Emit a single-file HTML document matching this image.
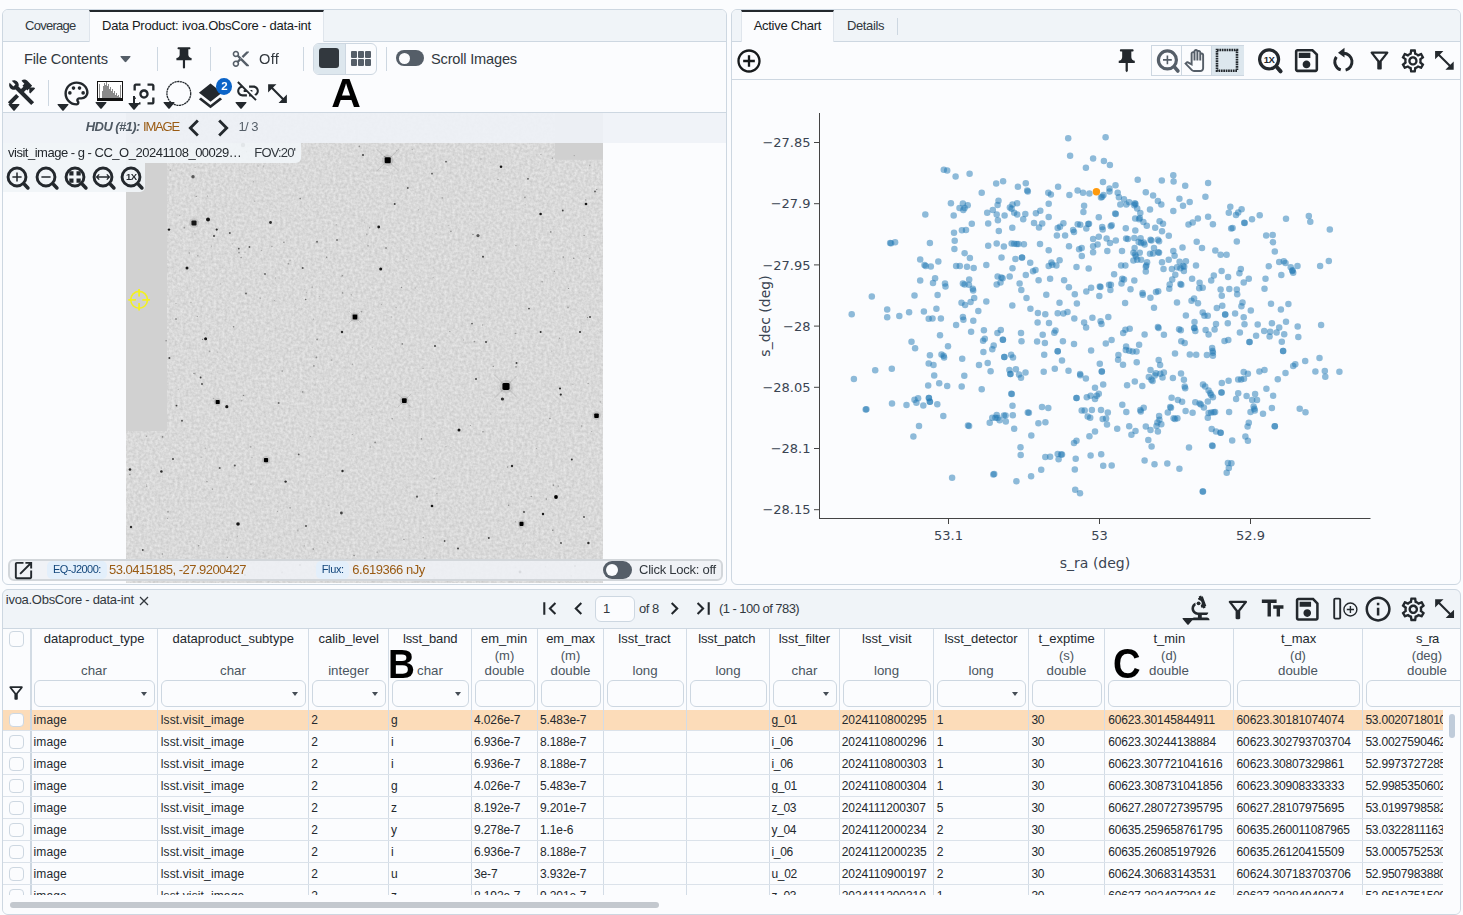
<!DOCTYPE html>
<html lang="en"><head><meta charset="utf-8"><title>Firefly - ivoa.ObsCore data-int</title>
<style>
html,body{margin:0;padding:0;}
body{width:1463px;height:915px;overflow:hidden;background:#fbfcfe;font-family:"Liberation Sans",sans-serif;color:#32383e;}
#root{position:relative;width:1463px;height:915px;overflow:hidden;}
.t{position:absolute;white-space:nowrap;line-height:1;font-family:"Liberation Sans",sans-serif;}
.dv{font-family:"DejaVu Sans","Liberation Sans",sans-serif;}
.i{position:absolute;display:block;overflow:visible;}
.b{position:absolute;box-sizing:border-box;}
.panel{position:absolute;box-sizing:border-box;border:1px solid #cdd7e1;border-radius:6px;background:#fbfcfe;overflow:hidden;}
.tabbar{position:absolute;left:0;top:0;right:0;height:31px;background:#f0f4f8;border-bottom:1px solid #cdd7e1;}
.tabsel{position:absolute;top:0;height:32px;background:#fbfcfe;border-top:2px solid #23282d;box-sizing:border-box;border-left:1px solid #dfe5ec;border-right:1px solid #dfe5ec;}
.vdiv{position:absolute;width:1px;background:#cdd7e1;}
.hline{position:absolute;height:1px;background:#cdd7e1;}
.toggle{position:absolute;width:28px;height:16px;border-radius:8px;background:#555e68;}
.toggle:after{content:"";position:absolute;left:3px;top:2.5px;width:11px;height:11px;border-radius:50%;background:#fbfcfe;}
.chip{position:absolute;background:#e3effb;border-radius:5px;}
.tg2{width:29px;height:17.600px;border-radius:9px;}
.tg2:after{left:3px;top:2.800px;width:12px;height:12px;}

</style></head>
<body>
<div id="root">
<div class="panel" id="lp" style="left:2px;top:9px;width:725px;height:576px"><div class="tabbar"></div>
<div style="position:absolute;left:-3px;top:-10px;width:1463px;height:915px">
<svg class="i" style="left:126px;top:112px" width="477" height="471" viewBox="126 112 477 471">
<defs><filter id="nz" x="0" y="0" width="100%" height="100%"><feTurbulence type="fractalNoise" baseFrequency="0.36" numOctaves="2" seed="3" result="n"/><feGaussianBlur in="n" stdDeviation="0.6" result="nb"/><feColorMatrix in="nb" type="matrix" values="0 0 0 0 0  0 0 0 0 0  0 0 0 0 0  1.2 0 0 0 -0.1"/></filter><filter id="bl"><feGaussianBlur stdDeviation="0.55"/></filter></defs>
<rect x="126" y="112" width="477" height="471" fill="#ebebeb"/>
<rect x="126" y="112" width="477" height="471" filter="url(#nz)" opacity="0.15"/>
<rect x="126" y="112" width="41" height="319" fill="#d1d1d1"/>
<rect x="555" y="112" width="48" height="47.800" fill="#d0d0d0"/>
<g filter="url(#bl)"><circle cx="281.2" cy="210.8" r="0.76" fill="#000" opacity="0.14"/><circle cx="381.5" cy="304.4" r="0.52" fill="#000" opacity="0.26"/><circle cx="328.8" cy="505.5" r="0.55" fill="#000" opacity="0.18"/><circle cx="424.8" cy="558.2" r="0.73" fill="#000" opacity="0.23"/><circle cx="589.8" cy="165.3" r="0.84" fill="#000" opacity="0.20"/><circle cx="196.2" cy="196.4" r="0.62" fill="#000" opacity="0.35"/><circle cx="213.5" cy="398.6" r="0.76" fill="#000" opacity="0.22"/><circle cx="387.1" cy="172.4" r="0.52" fill="#000" opacity="0.18"/><circle cx="449.8" cy="331.4" r="0.63" fill="#000" opacity="0.28"/><circle cx="342.4" cy="275.7" r="0.82" fill="#000" opacity="0.32"/><circle cx="243.5" cy="395.4" r="0.71" fill="#000" opacity="0.37"/><circle cx="473.0" cy="270.5" r="0.89" fill="#000" opacity="0.15"/><circle cx="325.8" cy="475.1" r="0.56" fill="#000" opacity="0.26"/><circle cx="146.5" cy="436.3" r="0.81" fill="#000" opacity="0.28"/><circle cx="542.1" cy="281.8" r="0.78" fill="#000" opacity="0.29"/><circle cx="402.3" cy="343.9" r="0.84" fill="#000" opacity="0.38"/><circle cx="352.2" cy="434.6" r="0.52" fill="#000" opacity="0.32"/><circle cx="434.1" cy="578.0" r="0.83" fill="#000" opacity="0.20"/><circle cx="310.5" cy="436.5" r="0.51" fill="#000" opacity="0.25"/><circle cx="207.5" cy="196.1" r="0.52" fill="#000" opacity="0.34"/><circle cx="189.2" cy="253.0" r="0.66" fill="#000" opacity="0.36"/><circle cx="166.1" cy="340.8" r="0.72" fill="#000" opacity="0.37"/><circle cx="515.5" cy="521.7" r="0.61" fill="#000" opacity="0.24"/><circle cx="297.7" cy="530.5" r="0.88" fill="#000" opacity="0.16"/><circle cx="211.4" cy="246.1" r="0.59" fill="#000" opacity="0.26"/><circle cx="406.7" cy="259.6" r="0.50" fill="#000" opacity="0.24"/><circle cx="302.7" cy="391.9" r="0.88" fill="#000" opacity="0.31"/><circle cx="371.8" cy="414.3" r="0.77" fill="#000" opacity="0.14"/><circle cx="553.5" cy="485.1" r="0.85" fill="#000" opacity="0.34"/><circle cx="313.6" cy="319.0" r="0.54" fill="#000" opacity="0.30"/><circle cx="226.7" cy="215.8" r="0.64" fill="#000" opacity="0.13"/><circle cx="176.0" cy="303.5" r="0.51" fill="#000" opacity="0.36"/><circle cx="418.5" cy="209.8" r="0.60" fill="#000" opacity="0.22"/><circle cx="300.2" cy="198.6" r="0.84" fill="#000" opacity="0.40"/><circle cx="348.4" cy="356.0" r="0.53" fill="#000" opacity="0.15"/><circle cx="290.1" cy="260.4" r="0.83" fill="#000" opacity="0.17"/><circle cx="138.9" cy="559.6" r="0.71" fill="#000" opacity="0.16"/><circle cx="384.9" cy="156.8" r="0.71" fill="#000" opacity="0.39"/><circle cx="536.4" cy="448.5" r="0.60" fill="#000" opacity="0.22"/><circle cx="207.0" cy="481.6" r="0.71" fill="#000" opacity="0.34"/><circle cx="283.9" cy="242.2" r="0.82" fill="#000" opacity="0.40"/><circle cx="531.3" cy="496.5" r="0.83" fill="#000" opacity="0.33"/><circle cx="235.2" cy="370.7" r="0.64" fill="#000" opacity="0.13"/><circle cx="250.6" cy="446.9" r="0.88" fill="#000" opacity="0.25"/><circle cx="571.2" cy="575.8" r="0.88" fill="#000" opacity="0.22"/><circle cx="232.3" cy="243.9" r="0.58" fill="#000" opacity="0.18"/><circle cx="423.2" cy="537.5" r="0.84" fill="#000" opacity="0.25"/><circle cx="436.9" cy="493.6" r="0.53" fill="#000" opacity="0.30"/><circle cx="558.3" cy="486.1" r="0.80" fill="#000" opacity="0.25"/><circle cx="212.4" cy="489.1" r="0.63" fill="#000" opacity="0.34"/><circle cx="587.6" cy="317.6" r="0.66" fill="#000" opacity="0.39"/><circle cx="470.8" cy="219.1" r="0.55" fill="#000" opacity="0.16"/><circle cx="556.0" cy="496.6" r="0.56" fill="#000" opacity="0.35"/><circle cx="591.7" cy="431.6" r="0.64" fill="#000" opacity="0.27"/><circle cx="190.0" cy="151.2" r="0.89" fill="#000" opacity="0.30"/><circle cx="377.1" cy="552.1" r="0.67" fill="#000" opacity="0.36"/><circle cx="518.8" cy="237.0" r="0.60" fill="#000" opacity="0.20"/><circle cx="241.8" cy="400.7" r="0.60" fill="#000" opacity="0.24"/><circle cx="190.0" cy="541.8" r="0.64" fill="#000" opacity="0.25"/><circle cx="403.9" cy="539.3" r="0.67" fill="#000" opacity="0.38"/><circle cx="365.3" cy="376.9" r="0.71" fill="#000" opacity="0.13"/><circle cx="336.2" cy="224.8" r="0.50" fill="#000" opacity="0.34"/><circle cx="209.5" cy="351.4" r="0.79" fill="#000" opacity="0.28"/><circle cx="282.2" cy="371.0" r="0.72" fill="#000" opacity="0.34"/><circle cx="178.2" cy="389.3" r="0.60" fill="#000" opacity="0.20"/><circle cx="493.3" cy="366.4" r="0.72" fill="#000" opacity="0.33"/><circle cx="559.6" cy="338.3" r="0.75" fill="#000" opacity="0.26"/><circle cx="370.3" cy="447.0" r="0.68" fill="#000" opacity="0.27"/><circle cx="354.1" cy="555.5" r="0.78" fill="#000" opacity="0.37"/><circle cx="573.7" cy="258.2" r="0.72" fill="#000" opacity="0.38"/><circle cx="525.3" cy="204.8" r="0.55" fill="#000" opacity="0.24"/><circle cx="162.6" cy="436.9" r="0.81" fill="#000" opacity="0.37"/><circle cx="201.1" cy="457.2" r="0.76" fill="#000" opacity="0.16"/><circle cx="545.6" cy="566.8" r="0.59" fill="#000" opacity="0.39"/><circle cx="316.4" cy="357.4" r="0.90" fill="#000" opacity="0.35"/><circle cx="204.4" cy="333.1" r="0.71" fill="#000" opacity="0.21"/><circle cx="220.6" cy="283.9" r="0.79" fill="#000" opacity="0.13"/><circle cx="390.1" cy="337.0" r="0.51" fill="#000" opacity="0.21"/><circle cx="423.1" cy="368.3" r="0.53" fill="#000" opacity="0.40"/><circle cx="500.9" cy="568.7" r="0.54" fill="#000" opacity="0.19"/><circle cx="146.7" cy="484.6" r="0.61" fill="#000" opacity="0.16"/><circle cx="327.7" cy="542.4" r="0.83" fill="#000" opacity="0.19"/><circle cx="198.7" cy="545.8" r="0.73" fill="#000" opacity="0.32"/><circle cx="170.3" cy="170.1" r="0.78" fill="#000" opacity="0.24"/><circle cx="162.3" cy="554.1" r="0.75" fill="#000" opacity="0.34"/><circle cx="167.6" cy="518.3" r="0.53" fill="#000" opacity="0.36"/><circle cx="342.6" cy="292.9" r="0.72" fill="#000" opacity="0.38"/><circle cx="254.7" cy="201.3" r="0.71" fill="#000" opacity="0.19"/><circle cx="179.8" cy="215.4" r="0.52" fill="#000" opacity="0.18"/><circle cx="275.6" cy="278.0" r="0.80" fill="#000" opacity="0.20"/><circle cx="364.5" cy="222.6" r="0.64" fill="#000" opacity="0.13"/><circle cx="246.5" cy="151.7" r="0.79" fill="#000" opacity="0.27"/><circle cx="217.6" cy="352.0" r="0.87" fill="#000" opacity="0.15"/><circle cx="515.3" cy="333.4" r="0.70" fill="#000" opacity="0.35"/><circle cx="313.9" cy="365.9" r="0.78" fill="#000" opacity="0.40"/><circle cx="290.1" cy="507.9" r="0.78" fill="#000" opacity="0.30"/><circle cx="319.4" cy="296.5" r="0.52" fill="#000" opacity="0.16"/><circle cx="161.5" cy="468.0" r="0.60" fill="#000" opacity="0.17"/><circle cx="168.0" cy="511.8" r="0.85" fill="#000" opacity="0.31"/><circle cx="261.4" cy="250.6" r="0.62" fill="#000" opacity="0.25"/><circle cx="202.5" cy="339.4" r="0.61" fill="#000" opacity="0.39"/><circle cx="588.1" cy="383.5" r="0.60" fill="#000" opacity="0.39"/><circle cx="274.4" cy="300.5" r="0.50" fill="#000" opacity="0.23"/><circle cx="352.5" cy="364.2" r="0.58" fill="#000" opacity="0.26"/><circle cx="170.5" cy="319.2" r="0.52" fill="#000" opacity="0.13"/><circle cx="271.9" cy="246.5" r="0.73" fill="#000" opacity="0.27"/><circle cx="483.0" cy="431.7" r="0.79" fill="#000" opacity="0.37"/><circle cx="312.2" cy="287.2" r="0.89" fill="#000" opacity="0.16"/><circle cx="470.5" cy="425.4" r="0.52" fill="#000" opacity="0.35"/><circle cx="549.9" cy="418.5" r="0.79" fill="#000" opacity="0.35"/><circle cx="193.9" cy="373.4" r="0.70" fill="#000" opacity="0.35"/><circle cx="508.6" cy="505.3" r="0.73" fill="#000" opacity="0.37"/><circle cx="451.0" cy="447.3" r="0.59" fill="#000" opacity="0.13"/><circle cx="191.0" cy="302.3" r="0.54" fill="#000" opacity="0.35"/><circle cx="392.2" cy="418.7" r="0.75" fill="#000" opacity="0.31"/><circle cx="359.4" cy="146.4" r="0.82" fill="#000" opacity="0.33"/><circle cx="365.9" cy="378.3" r="0.76" fill="#000" opacity="0.14"/><circle cx="476.5" cy="255.0" r="0.53" fill="#000" opacity="0.19"/><circle cx="473.0" cy="234.5" r="0.80" fill="#000" opacity="0.39"/><circle cx="361.6" cy="311.8" r="0.69" fill="#000" opacity="0.31"/><circle cx="490.8" cy="414.0" r="0.76" fill="#000" opacity="0.14"/><circle cx="197.7" cy="255.7" r="0.80" fill="#000" opacity="0.21"/><circle cx="396.6" cy="150.4" r="0.52" fill="#000" opacity="0.20"/><circle cx="445.9" cy="446.8" r="0.77" fill="#000" opacity="0.20"/><circle cx="372.3" cy="347.6" r="0.69" fill="#000" opacity="0.15"/><circle cx="550.7" cy="231.9" r="0.89" fill="#000" opacity="0.38"/><circle cx="515.8" cy="567.1" r="0.68" fill="#000" opacity="0.20"/><circle cx="227.3" cy="557.3" r="0.58" fill="#000" opacity="0.28"/><circle cx="195.0" cy="373.5" r="0.88" fill="#000" opacity="0.16"/><circle cx="516.0" cy="366.8" r="0.85" fill="#000" opacity="0.32"/><circle cx="237.4" cy="536.4" r="0.69" fill="#000" opacity="0.13"/><circle cx="341.2" cy="276.7" r="0.56" fill="#000" opacity="0.22"/><circle cx="277.5" cy="511.3" r="0.50" fill="#000" opacity="0.33"/><circle cx="524.9" cy="197.3" r="0.87" fill="#000" opacity="0.32"/><circle cx="554.4" cy="271.4" r="0.65" fill="#000" opacity="0.23"/><circle cx="600.4" cy="401.9" r="0.64" fill="#000" opacity="0.24"/><circle cx="258.1" cy="166.0" r="0.54" fill="#000" opacity="0.35"/><circle cx="263.1" cy="552.9" r="0.60" fill="#000" opacity="0.19"/><circle cx="369.7" cy="227.8" r="0.65" fill="#000" opacity="0.39"/><circle cx="546.3" cy="499.0" r="0.75" fill="#000" opacity="0.38"/><circle cx="573.0" cy="384.5" r="0.79" fill="#000" opacity="0.13"/><circle cx="474.4" cy="341.6" r="0.80" fill="#000" opacity="0.30"/><circle cx="263.4" cy="166.4" r="0.87" fill="#000" opacity="0.16"/><circle cx="351.3" cy="294.8" r="0.62" fill="#000" opacity="0.33"/><circle cx="589.8" cy="258.4" r="0.76" fill="#000" opacity="0.20"/><circle cx="391.6" cy="316.9" r="0.57" fill="#000" opacity="0.17"/><circle cx="226.3" cy="540.0" r="0.70" fill="#000" opacity="0.18"/><circle cx="556.7" cy="579.5" r="0.68" fill="#000" opacity="0.16"/><circle cx="219.0" cy="184.6" r="0.64" fill="#000" opacity="0.15"/><circle cx="241.1" cy="257.6" r="0.73" fill="#000" opacity="0.37"/><circle cx="482.6" cy="325.0" r="0.67" fill="#000" opacity="0.27"/><circle cx="306.3" cy="292.5" r="0.52" fill="#000" opacity="0.20"/><circle cx="585.7" cy="199.9" r="0.70" fill="#000" opacity="0.30"/><circle cx="536.1" cy="239.2" r="0.61" fill="#000" opacity="0.19"/><circle cx="317.1" cy="339.4" r="0.88" fill="#000" opacity="0.36"/><circle cx="540.9" cy="154.5" r="0.51" fill="#000" opacity="0.32"/><circle cx="551.7" cy="351.3" r="0.73" fill="#000" opacity="0.12"/><circle cx="313.2" cy="549.1" r="0.83" fill="#000" opacity="0.36"/><circle cx="587.9" cy="253.3" r="0.54" fill="#000" opacity="0.16"/><circle cx="375.1" cy="442.4" r="0.88" fill="#000" opacity="0.32"/><circle cx="434.2" cy="478.5" r="0.68" fill="#000" opacity="0.27"/><circle cx="146.7" cy="486.1" r="0.59" fill="#000" opacity="0.38"/><circle cx="433.3" cy="277.4" r="0.55" fill="#000" opacity="0.19"/><circle cx="429.0" cy="449.6" r="0.54" fill="#000" opacity="0.14"/><circle cx="376.1" cy="399.1" r="0.66" fill="#000" opacity="0.18"/><circle cx="412.3" cy="149.6" r="0.62" fill="#000" opacity="0.25"/><circle cx="581.6" cy="426.0" r="0.85" fill="#000" opacity="0.25"/><circle cx="239.0" cy="252.7" r="0.88" fill="#000" opacity="0.32"/><circle cx="273.4" cy="154.5" r="0.70" fill="#000" opacity="0.31"/><circle cx="326.7" cy="257.2" r="0.77" fill="#000" opacity="0.38"/><circle cx="235.3" cy="159.9" r="0.64" fill="#000" opacity="0.24"/><circle cx="450.9" cy="231.4" r="0.82" fill="#000" opacity="0.33"/><circle cx="366.8" cy="234.5" r="0.89" fill="#000" opacity="0.21"/><circle cx="515.9" cy="245.6" r="0.59" fill="#000" opacity="0.33"/><circle cx="267.5" cy="560.0" r="0.70" fill="#000" opacity="0.17"/><circle cx="233.6" cy="326.8" r="0.77" fill="#000" opacity="0.39"/><circle cx="197.2" cy="316.5" r="0.59" fill="#000" opacity="0.39"/><circle cx="195.1" cy="167.6" r="0.52" fill="#000" opacity="0.23"/><circle cx="552.8" cy="530.2" r="0.79" fill="#000" opacity="0.40"/><circle cx="568.6" cy="288.5" r="0.57" fill="#000" opacity="0.38"/><circle cx="481.0" cy="158.9" r="0.77" fill="#000" opacity="0.23"/><circle cx="304.8" cy="289.6" r="0.57" fill="#000" opacity="0.12"/><circle cx="260.3" cy="298.2" r="0.88" fill="#000" opacity="0.15"/><circle cx="584.1" cy="235.4" r="0.64" fill="#000" opacity="0.35"/><circle cx="516.8" cy="333.5" r="0.52" fill="#000" opacity="0.25"/><circle cx="304.3" cy="545.9" r="0.58" fill="#000" opacity="0.22"/><circle cx="552.3" cy="158.2" r="0.66" fill="#000" opacity="0.35"/><circle cx="490.6" cy="162.7" r="0.51" fill="#000" opacity="0.14"/><circle cx="563.2" cy="257.1" r="0.80" fill="#000" opacity="0.37"/><circle cx="288.4" cy="263.7" r="0.88" fill="#000" opacity="0.29"/><circle cx="252.0" cy="457.5" r="0.63" fill="#000" opacity="0.20"/><circle cx="129.8" cy="474.5" r="0.87" fill="#000" opacity="0.30"/><circle cx="574.2" cy="155.6" r="0.59" fill="#000" opacity="0.25"/><circle cx="580.6" cy="560.9" r="0.65" fill="#000" opacity="0.19"/><circle cx="331.4" cy="360.2" r="0.87" fill="#000" opacity="0.17"/><circle cx="507.6" cy="467.0" r="0.83" fill="#000" opacity="0.34"/><circle cx="415.2" cy="287.9" r="0.63" fill="#000" opacity="0.22"/><circle cx="498.0" cy="179.5" r="0.58" fill="#000" opacity="0.33"/><circle cx="245.0" cy="173.2" r="0.51" fill="#000" opacity="0.27"/><circle cx="282.1" cy="572.4" r="0.85" fill="#000" opacity="0.40"/><circle cx="253.3" cy="181.7" r="0.54" fill="#000" opacity="0.26"/><circle cx="463.7" cy="339.9" r="0.59" fill="#000" opacity="0.24"/><circle cx="421.4" cy="438.9" r="0.80" fill="#000" opacity="0.36"/><circle cx="442.3" cy="197.8" r="0.84" fill="#000" opacity="0.20"/><circle cx="396.1" cy="307.6" r="0.80" fill="#000" opacity="0.18"/><circle cx="245.0" cy="252.0" r="0.56" fill="#000" opacity="0.37"/><circle cx="401.5" cy="287.3" r="0.66" fill="#000" opacity="0.40"/><circle cx="368.0" cy="245.9" r="0.82" fill="#000" opacity="0.30"/><circle cx="596.7" cy="189.6" r="0.69" fill="#000" opacity="0.35"/><circle cx="525.6" cy="543.7" r="0.52" fill="#000" opacity="0.20"/><circle cx="184.4" cy="227.7" r="0.89" fill="#000" opacity="0.28"/><circle cx="568.0" cy="307.3" r="0.85" fill="#000" opacity="0.25"/><circle cx="251.0" cy="484.1" r="0.88" fill="#000" opacity="0.15"/><circle cx="410.0" cy="415.3" r="0.59" fill="#000" opacity="0.22"/><circle cx="194.9" cy="233.9" r="0.60" fill="#000" opacity="0.29"/><circle cx="436.2" cy="233.7" r="0.50" fill="#000" opacity="0.21"/><circle cx="448.8" cy="225.7" r="0.62" fill="#000" opacity="0.18"/><circle cx="504.2" cy="383.9" r="0.53" fill="#000" opacity="0.15"/><circle cx="315.0" cy="384.9" r="0.76" fill="#000" opacity="0.15"/><circle cx="205.4" cy="448.2" r="0.66" fill="#000" opacity="0.20"/><circle cx="273.5" cy="560.6" r="0.62" fill="#000" opacity="0.28"/><circle cx="387.7" cy="160.2" r="5.8" fill="#000" opacity="0.10"/><rect x="384.64" y="157.14" width="6.12" height="6.12" rx="1.26" fill="#000" opacity="1"/><circle cx="194" cy="223" r="4.8" fill="#000" opacity="0.10"/><rect x="191.45" y="220.45" width="5.10" height="5.10" rx="1.05" fill="#000" opacity="0.9"/><circle cx="208" cy="219.5" r="2.0" fill="#000" opacity="0.9"/><circle cx="355" cy="317" r="4.5" fill="#000" opacity="0.10"/><rect x="352.62" y="314.62" width="4.76" height="4.76" rx="0.98" fill="#000" opacity="1"/><circle cx="506" cy="386.5" r="6.7" fill="#000" opacity="0.10"/><rect x="502.43" y="382.93" width="7.14" height="7.14" rx="1.47" fill="#000" opacity="1"/><circle cx="404.3" cy="400.6" r="4.5" fill="#000" opacity="0.10"/><rect x="401.92" y="398.22" width="4.76" height="4.76" rx="0.98" fill="#000" opacity="1"/><circle cx="596.5" cy="415.7" r="4.3" fill="#000" opacity="0.10"/><rect x="594.21" y="413.40" width="4.59" height="4.59" rx="0.94" fill="#000" opacity="1"/><circle cx="217.7" cy="402" r="3.8" fill="#000" opacity="0.10"/><rect x="215.66" y="399.96" width="4.08" height="4.08" rx="0.84" fill="#000" opacity="1"/><circle cx="226.8" cy="406.7" r="1.6" fill="#000" opacity="0.9"/><circle cx="266" cy="460" r="4.0" fill="#000" opacity="0.10"/><rect x="263.88" y="457.88" width="4.25" height="4.25" rx="0.88" fill="#000" opacity="1"/><circle cx="521.5" cy="523.9" r="3.8" fill="#000" opacity="0.10"/><rect x="519.46" y="521.86" width="4.08" height="4.08" rx="0.84" fill="#000" opacity="1"/><circle cx="556" cy="497" r="1.9" fill="#000" opacity="1"/><circle cx="238" cy="524" r="1.8" fill="#000" opacity="0.9"/><circle cx="187" cy="268" r="1.5" fill="#000" opacity="0.9"/><circle cx="380.7" cy="269" r="1.5" fill="#000" opacity="0.9"/><circle cx="378.7" cy="227" r="1.4" fill="#000" opacity="0.9"/><circle cx="270.5" cy="222.5" r="1.4" fill="#000" opacity="0.8"/><circle cx="205.6" cy="338.7" r="1.5" fill="#000" opacity="0.9"/><circle cx="459" cy="430" r="1.5" fill="#000" opacity="0.9"/><circle cx="342" cy="332" r="1.2" fill="#000" opacity="0.8"/><circle cx="502.4" cy="399" r="1.6" fill="#000" opacity="0.8"/><circle cx="540.6" cy="214" r="1.3" fill="#000" opacity="0.9"/><circle cx="586" cy="204" r="1.3" fill="#000" opacity="0.9"/><circle cx="501" cy="166.7" r="1.3" fill="#000" opacity="0.9"/><circle cx="512" cy="466" r="1.2" fill="#000" opacity="0.8"/><circle cx="432" cy="506" r="1.3" fill="#000" opacity="0.9"/><circle cx="161.4" cy="471.5" r="1.3" fill="#000" opacity="0.8"/><circle cx="130" cy="469.5" r="1.3" fill="#000" opacity="0.8"/><circle cx="169" cy="229.6" r="1.2" fill="#000" opacity="0.9"/><circle cx="131" cy="527" r="1.2" fill="#000" opacity="0.8"/><circle cx="543" cy="514" r="1.2" fill="#000" opacity="0.9"/><circle cx="341.4" cy="513" r="1.4" fill="#000" opacity="0.7"/><circle cx="342.5" cy="471" r="1.2" fill="#000" opacity="0.8"/><circle cx="285.6" cy="481.6" r="1.2" fill="#000" opacity="0.8"/><circle cx="478" cy="235.6" r="1.6" fill="#000" opacity="0.6"/><circle cx="193" cy="176.8" r="1.7" fill="#000" opacity="0.6"/><circle cx="363" cy="155" r="1.0" fill="#000" opacity="0.7"/><circle cx="173" cy="459" r="1.0" fill="#000" opacity="0.7"/><circle cx="219.7" cy="468" r="1.0" fill="#000" opacity="0.6"/><circle cx="234.8" cy="465.5" r="1.0" fill="#000" opacity="0.6"/><circle cx="588.4" cy="543" r="1.2" fill="#000" opacity="0.8"/><circle cx="571.8" cy="459.5" r="1.0" fill="#000" opacity="0.8"/><circle cx="560" cy="388.5" r="1.1" fill="#000" opacity="0.8"/><circle cx="560.8" cy="394.6" r="1.1" fill="#000" opacity="0.8"/><circle cx="540.6" cy="332" r="1.0" fill="#000" opacity="0.8"/><circle cx="580" cy="332" r="1.0" fill="#000" opacity="0.8"/><circle cx="590" cy="317" r="1.0" fill="#000" opacity="0.7"/><circle cx="486" cy="342" r="1.0" fill="#000" opacity="0.7"/><circle cx="435" cy="346" r="1.0" fill="#000" opacity="0.7"/><circle cx="516.5" cy="363" r="1.0" fill="#000" opacity="0.7"/><circle cx="476" cy="379" r="1.0" fill="#000" opacity="0.7"/><circle cx="472" cy="323.6" r="0.9" fill="#000" opacity="0.6"/><circle cx="529" cy="308.6" r="0.9" fill="#000" opacity="0.7"/><circle cx="483" cy="256.7" r="1.0" fill="#000" opacity="0.7"/><circle cx="394.7" cy="204" r="1.0" fill="#000" opacity="0.7"/><circle cx="407.8" cy="188" r="0.9" fill="#000" opacity="0.6"/><circle cx="432" cy="173.7" r="0.9" fill="#000" opacity="0.6"/><circle cx="446" cy="161.7" r="0.9" fill="#000" opacity="0.6"/><circle cx="216.7" cy="229.6" r="1.1" fill="#000" opacity="0.8"/><circle cx="214" cy="236" r="1.0" fill="#000" opacity="0.7"/><circle cx="229.8" cy="233" r="1.0" fill="#000" opacity="0.6"/><circle cx="238.8" cy="248.7" r="0.9" fill="#000" opacity="0.6"/><circle cx="249.4" cy="247" r="0.9" fill="#000" opacity="0.6"/><circle cx="302.7" cy="268" r="1.0" fill="#000" opacity="0.6"/><circle cx="265" cy="274" r="0.9" fill="#000" opacity="0.6"/><circle cx="246" cy="293.5" r="0.9" fill="#000" opacity="0.6"/><circle cx="305.7" cy="299.5" r="0.8" fill="#000" opacity="0.5"/><circle cx="176" cy="319" r="0.8" fill="#000" opacity="0.6"/><circle cx="169.4" cy="357.9" r="1.0" fill="#000" opacity="0.7"/><circle cx="200.6" cy="377.5" r="0.9" fill="#000" opacity="0.7"/><circle cx="202" cy="384" r="0.9" fill="#000" opacity="0.7"/><circle cx="278.6" cy="403" r="1.0" fill="#000" opacity="0.5"/><circle cx="176.5" cy="405.6" r="0.9" fill="#000" opacity="0.7"/><circle cx="182" cy="420.7" r="1.0" fill="#000" opacity="0.6"/><circle cx="298.7" cy="454.4" r="0.9" fill="#000" opacity="0.6"/><circle cx="306" cy="526" r="0.9" fill="#000" opacity="0.7"/><circle cx="142.8" cy="550" r="0.9" fill="#000" opacity="0.7"/><circle cx="417" cy="496.7" r="1.1" fill="#000" opacity="0.6"/><circle cx="488.8" cy="538" r="1.0" fill="#000" opacity="0.7"/><circle cx="458" cy="548.5" r="1.0" fill="#000" opacity="0.7"/><circle cx="444.6" cy="541" r="0.9" fill="#000" opacity="0.6"/><circle cx="561" cy="543" r="0.9" fill="#000" opacity="0.7"/><circle cx="584" cy="517" r="0.9" fill="#000" opacity="0.7"/><circle cx="524" cy="512" r="0.9" fill="#000" opacity="0.7"/><circle cx="528" cy="178.8" r="0.9" fill="#000" opacity="0.6"/><circle cx="562.8" cy="210.5" r="0.9" fill="#000" opacity="0.7"/><circle cx="595" cy="191.4" r="0.9" fill="#000" opacity="0.6"/><circle cx="317" cy="241.7" r="1.0" fill="#000" opacity="0.5"/><circle cx="337" cy="240" r="0.9" fill="#000" opacity="0.5"/><circle cx="386" cy="248" r="0.8" fill="#000" opacity="0.5"/><circle cx="243" cy="145" r="2.2" fill="#000" opacity="0.8"/><circle cx="520" cy="572" r="1.4" fill="#000" opacity="0.9"/><circle cx="300" cy="565" r="0.9" fill="#000" opacity="0.6"/><circle cx="410" cy="570" r="0.9" fill="#000" opacity="0.6"/><circle cx="180" cy="560" r="0.9" fill="#000" opacity="0.6"/><circle cx="245" cy="575" r="0.9" fill="#000" opacity="0.6"/><circle cx="575" cy="566" r="0.9" fill="#000" opacity="0.6"/><path d="M376.7 171.2L398.7 149.2M376.7 149.2L398.7 171.2" stroke="#000" stroke-width="0.8" opacity="0.13"/><path d="M494 398.5L518 374.5M494 374.5L518 398.5" stroke="#000" stroke-width="0.8" opacity="0.13"/><path d="M397.3 407.6L411.3 393.6M397.3 393.6L411.3 407.6" stroke="#000" stroke-width="0.8" opacity="0.13"/><path d="M349 323L361 311M349 311L361 323" stroke="#000" stroke-width="0.8" opacity="0.13"/></g>
<g fill="none" stroke="#f7f410" stroke-width="1.600" opacity="0.92"><circle cx="139.100" cy="299.800" r="8.400"/><path d="M139.100 289v7.600M139.100 303v7.600M128.300 299.800h7.600M142.300 299.800h7.600" stroke-width="1.800"/></g>
</svg>
<div class="b" style="left:3px;top:112px;width:723px;height:31px;background:rgba(238,242,247,0.90);border-top:1px solid #cdd7e1"></div>
<span class="t" style="left:85.8px;top:120.3px;font-size:13px;color:#4f5963;letter-spacing:-0.59px;font-weight:700;font-style:italic;">HDU (#1):</span>
<span class="t" style="left:143px;top:120.3px;font-size:13px;color:#9a5b13;letter-spacing:-1.20px;">IMAGE</span>
<svg class="i" style="left:177.3px;top:111.2px" width="34" height="34" viewBox="0 0 24 24"><path fill="#23282d" d="M15.410 7.410 14 6l-6 6 6 6 1.410-1.410L10.830 12z"/></svg>
<svg class="i" style="left:205.9px;top:111.2px" width="34" height="34" viewBox="0 0 24 24"><path fill="#23282d" d="M10 6 8.590 7.410 13.170 12l-4.580 4.590L10 18l6-6z"/></svg>
<span class="t" style="left:238.4px;top:120.3px;font-size:13px;color:#555e68;letter-spacing:-0.57px;">1/ 3</span>
<div class="b" style="left:3px;top:143px;width:298px;height:20.2px;background:rgba(240,244,248,0.93);border-radius:0 0 5px 0"></div>
<span class="t" style="left:8px;top:145.7px;font-size:13px;color:#23282d;letter-spacing:-0.49px;">visit_image - g - CC_O_20241108_00029&hellip;</span>
<span class="t" style="left:254.3px;top:145.7px;font-size:13px;color:#32383e;letter-spacing:-0.85px;">FOV:20'</span>
<div class="b" style="left:3px;top:163px;width:142px;height:28.7px;background:rgba(240,244,248,0.93);border-radius:0 0 5px 0"></div>
<svg class="i" style="left:4.199999999999999px;top:163.800px" width="28" height="28" viewBox="-13 -13 28 28"><circle cx="0" cy="0" r="8.950" fill="none" stroke="#23282d" stroke-width="2.900"/><path d="M7.600 7.600l3.300 3.300" stroke="#23282d" stroke-width="3.600" stroke-linecap="round"/><path d="M-4.600 0h9.200M0 -4.600v9.200" stroke="#23282d" stroke-width="1.500" fill="none"/></svg>
<svg class="i" style="left:33px;top:163.800px" width="28" height="28" viewBox="-13 -13 28 28"><circle cx="0" cy="0" r="8.950" fill="none" stroke="#23282d" stroke-width="2.900"/><path d="M7.600 7.600l3.300 3.300" stroke="#23282d" stroke-width="3.600" stroke-linecap="round"/><path d="M-4.600 0h9.200" stroke="#23282d" stroke-width="1.500" fill="none"/></svg>
<svg class="i" style="left:61.5px;top:163.800px" width="28" height="28" viewBox="-13 -13 28 28"><circle cx="0" cy="0" r="8.950" fill="none" stroke="#23282d" stroke-width="2.900"/><path d="M7.600 7.600l3.300 3.300" stroke="#23282d" stroke-width="3.600" stroke-linecap="round"/><path fill="#23282d" d="M-5.700 -5.700h4.200v4.200h-4.200zM1.500 -5.700h4.200v4.200h-4.200zM-5.700 1.500h4.200v4.200h-4.200zM1.500 1.500h4.200v4.200h-4.200z"/></svg>
<svg class="i" style="left:90.2px;top:163.800px" width="28" height="28" viewBox="-13 -13 28 28"><circle cx="0" cy="0" r="8.950" fill="none" stroke="#23282d" stroke-width="2.900"/><path d="M7.600 7.600l3.300 3.300" stroke="#23282d" stroke-width="3.600" stroke-linecap="round"/><path d="M-6.300 0h12.600M-3.800 -2.600l-2.600 2.600 2.600 2.600M3.800 -2.600l2.600 2.600-2.600 2.600" stroke="#23282d" stroke-width="1.300" fill="none"/></svg>
<svg class="i" style="left:118.4px;top:163.800px" width="28" height="28" viewBox="-13 -13 28 28"><circle cx="0" cy="0" r="8.950" fill="none" stroke="#23282d" stroke-width="2.900"/><path d="M7.600 7.600l3.300 3.300" stroke="#23282d" stroke-width="3.600" stroke-linecap="round"/><text x="0.200" y="3.400" text-anchor="middle" font-family="Liberation Sans, sans-serif" font-weight="700" font-size="9.500" letter-spacing="-0.5" fill="#23282d">1X</text></svg>
<div class="b" style="left:8px;top:559px;width:715px;height:22px;background:rgba(238,241,245,0.90);border:2px solid #d2d6da;border-radius:6px"></div>
<svg class="i" style="left:12px;top:558.5px" width="23" height="23" viewBox="0 0 24 24"><path fill="#23282d" d="M19 19H5V5h7V3H5c-1.110 0-2 .9-2 2v14c0 1.100.89 2 2 2h14c1.100 0 2-.9 2-2v-7h-2v7zM14 3v2h3.590l-9.830 9.830 1.410 1.410L19 6.410V10h2V3h-7z"/></svg>
<div class="chip" style="left:47px;top:560.5px;width:60px;height:18px"></div>
<span class="t" style="left:53px;top:563.99px;font-size:11px;color:#12467b;letter-spacing:-0.54px;">EQ-J2000:</span>
<span class="t" style="left:109px;top:562.7px;font-size:13px;color:#9a5b13;letter-spacing:-0.52px;">53.0415185, -27.9200427</span>
<div class="chip" style="left:316px;top:560.5px;width:33px;height:18px"></div>
<span class="t" style="left:321.7px;top:563.99px;font-size:11px;color:#12467b;letter-spacing:-0.34px;">Flux:</span>
<span class="t" style="left:352.3px;top:562.7px;font-size:13px;color:#9a5b13;letter-spacing:-0.47px;">6.619366 nJy</span>
<div class="toggle tg2" style="left:603px;top:561px"></div>
<span class="t" style="left:639px;top:562.7px;font-size:13px;color:#32383e;letter-spacing:-0.25px;">Click Lock: off</span>
<div class="tabsel" style="left:89px;top:10px;width:235px"></div>
<span class="t" style="left:25px;top:19.0px;font-size:13px;color:#32383e;letter-spacing:-0.72px;">Coverage</span>
<span class="t" style="left:102px;top:19.0px;font-size:13px;color:#171a1c;letter-spacing:-0.23px;">Data Product: ivoa.ObsCore - data-int</span>
<span class="t" style="left:24px;top:51.54px;font-size:14.6px;color:#32383e;letter-spacing:-0.16px;">File Contents</span>
<svg class="i" style="left:120.200px;top:55.600px" width="11" height="6.500" viewBox="0 0 12 7" preserveAspectRatio="none"><path fill="#555e68" d="M1.200 0h9.600q1.300 0 .5 1l-4.400 5.200q-.9 1-1.800 0l-4.400-5.200q-.8-1 .5-1z"/></svg>
<div class="vdiv" style="left:157px;top:46.500px;height:24.500px"></div>
<svg class="i" style="left:170.5px;top:44.8px" width="26" height="26" viewBox="0 0 24 24"><path fill="#23282d" d="M16 9V4h1c.55 0 1-.45 1-1s-.45-1-1-1H7c-.55 0-1 .45-1 1s.45 1 1 1h1v5c0 1.66-1.34 3-3 3v2h5.97v7l1 1 1-1v-7H19v-2c-1.66 0-3-1.34-3-3z"/></svg>
<div class="vdiv" style="left:210px;top:46.500px;height:24.500px"></div>
<svg class="i" style="left:231.4px;top:48.7px" width="19.6" height="19.6" viewBox="0 0 24 24"><path fill="#555e68" d="M9.64 7.64c.23-.5.36-1.05.36-1.64 0-2.21-1.79-4-4-4S2 3.79 2 6s1.79 4 4 4c.59 0 1.14-.13 1.64-.36L10 12l-2.36 2.36C7.14 14.13 6.59 14 6 14c-2.21 0-4 1.79-4 4s1.79 4 4 4 4-1.79 4-4c0-.59-.13-1.14-.36-1.64L12 14l7 7h3v-1L9.64 7.64zM6 8c-1.1 0-2-.89-2-2s.9-2 2-2 2 .89 2 2-.9 2-2 2zm0 12c-1.1 0-2-.89-2-2s.9-2 2-2 2 .89 2 2-.9 2-2 2zm6-7.5c-.28 0-.5-.22-.5-.5s.22-.5.5-.5.5.22.5.5-.22.5-.5.5zM19 3l-6 6 2 2 7-7V3z"/></svg>
<span class="t" style="left:259px;top:51.54px;font-size:14.6px;color:#32383e;letter-spacing:0.32px;">Off</span>
<div class="vdiv" style="left:303px;top:46.500px;height:24.500px"></div>
<div class="b" style="left:313px;top:42.5px;width:64px;height:32px;border:1px solid #cdd7e1;border-radius:6px;background:#fbfcfe;overflow:hidden"></div>
<div class="b" style="left:314px;top:43.5px;width:32px;height:30px;background:#dde7ee;border-radius:5px 0 0 5px;border-right:1px solid #cdd7e1"></div>
<div class="b" style="left:319px;top:48px;width:20px;height:20px;background:#32383e;border-radius:3px"></div>
<div class="b" style="left:351.2px;top:50.7px;width:5.6px;height:6.9px;background:#555e68;border-radius:1px"></div><div class="b" style="left:358.3px;top:50.7px;width:5.6px;height:6.9px;background:#555e68;border-radius:1px"></div><div class="b" style="left:365.4px;top:50.7px;width:5.6px;height:6.9px;background:#555e68;border-radius:1px"></div><div class="b" style="left:351.2px;top:58.900000000000006px;width:5.6px;height:6.9px;background:#555e68;border-radius:1px"></div><div class="b" style="left:358.3px;top:58.900000000000006px;width:5.6px;height:6.9px;background:#555e68;border-radius:1px"></div><div class="b" style="left:365.4px;top:58.900000000000006px;width:5.6px;height:6.9px;background:#555e68;border-radius:1px"></div>
<div class="vdiv" style="left:386px;top:46.500px;height:24.500px"></div>
<div class="toggle" style="left:396px;top:50.4px"></div>
<span class="t" style="left:431px;top:51.54px;font-size:14.6px;color:#32383e;letter-spacing:-0.19px;">Scroll Images</span>
<svg class="i" style="left:5.1px;top:75.9px" width="33" height="33" viewBox="0 0 24 24"><path fill="#23282d" transform="translate(24,0) scale(-1,1)" d="m13.783 15.172 2.121-2.121 5.996 5.996-2.121 2.121zM17.500 10c1.930 0 3.500-1.570 3.500-3.500 0-.58-.16-1.120-.41-1.600l-2.700 2.700-1.490-1.490 2.700-2.700c-.48-.25-1.020-.41-1.600-.41C15.570 3 14 4.570 14 6.500c0 .41.08.8.21 1.160l-1.850 1.850-1.780-1.780.71-.71-1.410-1.410L12 3.490c-1.170-1.170-3.070-1.170-4.240 0L4.220 7.030l1.410 1.410H2.810l-.71.71 3.540 3.540.71-.71V9.150l1.410 1.410.71-.71 1.780 1.780-7.410 7.410 2.120 2.120L16.340 9.790c.36.13.75.21 1.160.21z"/></svg>
<div class="vdiv" style="left:48px;top:80px;height:26px"></div>
<svg class="i" style="left:61.5px;top:79px" width="29" height="29" viewBox="0 0 24 24"><path fill="#23282d" d="M12 22C6.490 22 2 17.510 2 12S6.490 2 12 2s10 4.040 10 9c0 3.310-2.690 6-6 6h-1.770c-.28 0-.5.22-.5.5 0 .12.05.23.13.33.41.47.64 1.060.64 1.670 0 1.380-1.120 2.500-2.500 2.500zm0-18c-4.410 0-8 3.590-8 8s3.590 8 8 8c.28 0 .5-.22.5-.5 0-.16-.08-.28-.14-.35-.41-.46-.63-1.050-.63-1.650 0-1.380 1.120-2.500 2.500-2.500H16c2.210 0 4-1.790 4-4 0-3.860-3.590-7-8-7z"/><circle cx="6.5" cy="11.5" r="1.5" fill="#23282d"/><circle cx="9.5" cy="7.5" r="1.5" fill="#23282d"/><circle cx="14.5" cy="7.5" r="1.5" fill="#23282d"/><circle cx="17.5" cy="11.5" r="1.5" fill="#23282d"/></svg>
<div class="b" style="left:97px;top:81px;width:26px;height:20px;border:1px solid #111;border-bottom:3px solid #111;background:#fff"></div>
<svg class="i" style="left:98px;top:82px" width="24" height="16" viewBox="0 0 24 16"><path fill="#8a8a8a" d="M1 16V2h1v14zM4 16V9h1V4h1V1h1v2h1V0h1v4h1V2h1v5h1V5h1v4h1V7h1v4h1V9h1v4h1v-2h1v3h1v-1h1v2h1v1zM22 16V3h1v13z"/></svg>
<svg class="i" style="left:129.8px;top:79.7px" width="28" height="28" viewBox="0 0 24 24"><path fill="#23282d" d="M5 15H3v4c0 1.100.9 2 2 2h4v-2H5v-4zM5 5h4V3H5c-1.100 0-2 .9-2 2v4h2V5zm14-2h-4v2h4v4h2V5c0-1.100-.9-2-2-2zm0 16h-4v2h4c1.100 0 2-.9 2-2v-4h-2v4zM12 8c-2.210 0-4 1.790-4 4s1.790 4 4 4 4-1.790 4-4-1.790-4-4-4zm0 6c-1.100 0-2-.9-2-2s.9-2 2-2 2 .9 2 2-.9 2-2 2z"/></svg>
<div class="b" style="left:128px;top:99px;width:11px;height:9px;background:#fbfcfe"></div>
<div class="b" style="left:133px;top:96px;width:2.2px;height:8px;background:#23282d"></div>
<svg class="i" style="left:165px;top:80px" width="28" height="28" viewBox="0 0 28 28"><circle cx="13.8" cy="13.4" r="11.9" fill="none" stroke="#23282d" stroke-width="1.3" stroke-dasharray="2.2 0.5"/></svg>
<svg class="i" style="left:195.4px;top:80.7px" width="31" height="31" viewBox="0 0 24 24"><path fill="#23282d" d="M11.990 18.540l-7.370-5.730L3 14.070l9 7 9-7-1.630-1.270-7.380 5.740zM12 16l7.360-5.730L21 9l-9-7-9 7 1.630 1.270L12 16z"/></svg>
<div class="b" style="left:216.2px;top:78.4px;width:16px;height:16.4px;background:#0b64c8;border-radius:50%"></div>
<span class="t" style="left:221.2px;top:81.27px;font-size:11.5px;color:#fff;font-weight:700;">2</span>
<svg class="i" style="left:234.5px;top:77.5px" width="26" height="26" viewBox="0 0 24 24"><path fill="#23282d" d="M17 7h-4v1.900h4c1.710 0 3.100 1.390 3.100 3.100 0 1.430-.98 2.630-2.310 2.980l1.460 1.460C20.880 15.610 22 13.950 22 12c0-2.760-2.240-5-5-5zm-1 4h-2.190l2 2H16zM2 4.270l3.110 3.110C3.290 8.120 2 9.910 2 12c0 2.760 2.240 5 5 5h4v-1.900H7c-1.710 0-3.100-1.390-3.100-3.100 0-1.590 1.210-2.900 2.760-3.070L8.730 11H8v2h2.730L13 15.270V17h1.730l4.010 4L20 19.740 3.270 3 2 4.270z"/></svg>
<svg class="i" style="left:265.3px;top:80.8px" width="25" height="25" viewBox="0 0 24 24"><path fill="#23282d" transform="translate(24,0) scale(-1,1)" d="M21 11V3h-8l3.290 3.290-10 10L3 13v8h8l-3.290-3.290 10-10z"/></svg>
<svg class="i" style="left:7.7px;top:104px" width="12" height="7" viewBox="0 0 12 7"><path fill="#23282d" d="M1.200 0h9.600q1.300 0 .5 1l-4.400 5.200q-.9 1-1.800 0l-4.400-5.200q-.8-1 .5-1z"/></svg>
<svg class="i" style="left:57px;top:104px" width="12" height="7" viewBox="0 0 12 7"><path fill="#23282d" d="M1.200 0h9.600q1.300 0 .5 1l-4.400 5.200q-.9 1-1.800 0l-4.400-5.200q-.8-1 .5-1z"/></svg>
<svg class="i" style="left:95px;top:102.3px" width="12" height="7" viewBox="0 0 12 7"><path fill="#23282d" d="M1.200 0h9.600q1.300 0 .5 1l-4.400 5.200q-.9 1-1.800 0l-4.400-5.200q-.8-1 .5-1z"/></svg>
<svg class="i" style="left:128px;top:103.3px" width="12" height="7" viewBox="0 0 12 7"><path fill="#23282d" d="M1.200 0h9.600q1.300 0 .5 1l-4.400 5.200q-.9 1-1.800 0l-4.400-5.200q-.8-1 .5-1z"/></svg>
<svg class="i" style="left:163px;top:101.8px" width="12" height="7" viewBox="0 0 12 7"><path fill="#23282d" d="M1.200 0h9.600q1.300 0 .5 1l-4.400 5.200q-.9 1-1.800 0l-4.400-5.200q-.8-1 .5-1z"/></svg>
<svg class="i" style="left:235px;top:102.2px" width="12" height="7" viewBox="0 0 12 7"><path fill="#23282d" d="M1.200 0h9.600q1.300 0 .5 1l-4.400 5.200q-.9 1-1.800 0l-4.400-5.200q-.8-1 .5-1z"/></svg>
<span class="t" style="left:331.3px;top:72.89px;font-size:41px;color:#000;font-weight:700;">A</span>
</div></div>
<div class="panel" id="rp" style="left:731px;top:9px;width:730px;height:576px"><div class="tabbar"></div>
<div style="position:absolute;left:-732px;top:-10px;width:1463px;height:915px">
<div class="tabsel" style="left:741px;top:10px;width:93px"></div>
<span class="t" style="left:753.7px;top:18.7px;font-size:13px;color:#171a1c;letter-spacing:-0.29px;">Active Chart</span>
<span class="t" style="left:846.9px;top:18.7px;font-size:13px;color:#32383e;letter-spacing:-0.36px;">Details</span>
<div class="vdiv" style="left:897px;top:18px;height:17px"></div>
<svg class="i" style="left:735px;top:46.9px" width="28" height="28" viewBox="0 0 24 24"><path fill="#171a1c" d="M13 7h-2v4H7v2h4v4h2v-4h4v-2h-4V7zm-1-5C6.480 2 2 6.480 2 12s4.480 10 10 10 10-4.480 10-10S17.520 2 12 2zm0 18c-4.410 0-8-3.590-8-8s3.590-8 8-8 8 3.590 8 8-3.590 8-8 8z"/></svg>
<svg class="i" style="left:1113.1px;top:46.7px" width="27.5" height="27.5" viewBox="0 0 24 24"><path fill="#23282d" d="M16 9V4h1c.55 0 1-.45 1-1s-.45-1-1-1H7c-.55 0-1 .45-1 1s.45 1 1 1h1v5c0 1.66-1.34 3-3 3v2h5.97v7l1 1 1-1v-7H19v-2c-1.66 0-3-1.34-3-3z"/></svg>
<div class="b" style="left:1150.5px;top:45px;width:93.5px;height:31px;border:1px solid #cdd7e1;background:#fbfcfe"></div>
<div class="b" style="left:1211.5px;top:46px;width:32px;height:29px;background:#dde7ee"></div>
<div class="vdiv" style="left:1181px;top:46px;height:29px"></div><div class="vdiv" style="left:1211px;top:46px;height:29px"></div>
<svg class="i" style="left:1154px;top:46px" width="28" height="28" viewBox="1154 46 28 28"><circle cx="1167.400" cy="59.900" r="9" fill="none" stroke="#555e68" stroke-width="3.200"/><path d="M1174.600 67.100l3.300 3.900" stroke="#555e68" stroke-width="3.600" stroke-linecap="round"/><path d="M1163 59.900h8.800M1167.400 55.500v8.800" stroke="#555e68" stroke-width="1.600"/></svg>
<svg class="i" style="left:1183.3px;top:49px" width="23" height="23" viewBox="0 0 24 24"><path fill="#555e68" d="M18 24h-6.550c-1.080 0-2.140-.45-2.890-1.230l-7.300-7.610 2.070-1.830c.62-.55 1.530-.66 2.260-.27L8 14.340V4.790c0-1.380 1.120-2.500 2.500-2.500.17 0 .34.02.51.05.09-1.300 1.170-2.330 2.490-2.330.86 0 1.610.43 2.060 1.090.29-.12.61-.18.94-.18 1.380 0 2.500 1.120 2.500 2.500v.28c.16-.03.33-.05.5-.05 1.380 0 2.500 1.120 2.500 2.500V20c0 2.210-1.790 4-4 4zM4.140 15.280l5.860 6.100c.38.39.9.62 1.440.62H18c1.100 0 2-.9 2-2V6.150c0-.28-.22-.5-.5-.5s-.5.22-.5.5V12h-2V3.420c0-.28-.22-.5-.5-.5s-.5.22-.5.5V12h-2V2.510c0-.28-.22-.5-.5-.5s-.5.22-.5.5V12h-2V4.790c0-.28-.22-.5-.5-.5s-.5.23-.5.5v12.870l-5.350-2.830-.51.45z"/></svg>
<svg class="i" style="left:1214px;top:46px" width="28" height="28" viewBox="1214 46 28 28"><rect x="1217" y="50" width="20" height="20.800" fill="none" stroke="#23282d" stroke-width="2.600" stroke-dasharray="1.700 0.700"/></svg>
<svg class="i" style="left:1256px;top:46px" width="28" height="28" viewBox="1256 46 28 28"><circle cx="1269.100" cy="59.300" r="9.500" fill="none" stroke="#23282d" stroke-width="3.200"/><path d="M1277.200 67.500l3.400 3.800" stroke="#23282d" stroke-width="4" stroke-linecap="round"/><text x="1269.100" y="62.800" text-anchor="middle" font-family="Liberation Sans, sans-serif" font-weight="700" font-size="9.500" letter-spacing="-0.5" fill="#23282d">1X</text></svg>
<svg class="i" style="left:1291.1px;top:44.7px" width="31" height="31" viewBox="0 0 24 24"><path fill="#23282d" d="M17 3H5c-1.110 0-2 .9-2 2v14c0 1.100.89 2 2 2h14c1.100 0 2-.9 2-2V7l-4-4zm2 16H5V5h11.170L19 7.830V19zm-7-7c-1.660 0-3 1.340-3 3s1.340 3 3 3 3-1.340 3-3-1.340-3-3-3zM6 6h9v4H6z"/></svg>
<svg class="i" style="left:1330px;top:44px" width="28" height="32" viewBox="1330 44 28 32"><path d="M1343.40 53.20A8.6 8.6 0 0 1 1345.63 70.11M1340.74 69.98A8.6 8.6 0 0 1 1336.36 56.87" fill="none" stroke="#23282d" stroke-width="2.900"/><path d="M1338 52.800L1344.500 47.800V57.600z" fill="#23282d"/></svg>
<svg class="i" style="left:1365.5px;top:46.7px" width="27" height="27" viewBox="0 0 24 24"><path fill="#23282d" d="M7 6h10l-5.01 6.3L7 6zm-2.750-.39C6.27 8.2 10 13 10 13v6c0 .55.45 1 1 1h2c.55 0 1-.45 1-1v-6s3.72-4.8 5.74-7.39c.51-.66.04-1.61-.79-1.61H5.04c-.83 0-1.300.95-.79 1.61z"/></svg>
<svg class="i" style="left:1398.7px;top:47.1px" width="27.9" height="27.9" viewBox="0 0 24 24"><path fill="#23282d" d="M19.43 12.98c.04-.32.07-.64.07-.98 0-.34-.03-.66-.07-.98l2.11-1.65c.19-.15.24-.42.12-.64l-2-3.46c-.09-.16-.26-.25-.44-.25-.06 0-.12.01-.17.03l-2.49 1c-.52-.4-1.08-.73-1.69-.98l-.38-2.65C14.46 2.18 14.25 2 14 2h-4c-.25 0-.46.18-.49.42l-.38 2.65c-.61.25-1.17.59-1.69.98l-2.49-1c-.06-.02-.12-.03-.18-.03-.17 0-.34.09-.43.25l-2 3.46c-.13.22-.07.49.12.64l2.11 1.65c-.04.32-.07.65-.07.98 0 .33.03.66.07.98l-2.11 1.65c-.19.15-.24.42-.12.64l2 3.46c.09.16.26.25.44.25.06 0 .12-.01.17-.03l2.49-1c.52.4 1.08.73 1.69.98l.38 2.65c.03.24.24.42.49.42h4c.25 0 .46-.18.49-.42l.38-2.65c.61-.25 1.17-.59 1.69-.98l2.49 1c.06.02.12.03.18.03.17 0 .34-.09.43-.25l2-3.46c.12-.22.07-.49-.12-.64l-2.11-1.65zm-1.98-1.71c.04.31.05.52.05.73 0 .21-.02.43-.05.73l-.14 1.13.89.7 1.08.84-.7 1.21-1.27-.51-1.04-.42-.9.68c-.43.32-.84.56-1.25.73l-1.06.43-.16 1.13-.2 1.35h-1.4l-.19-1.35-.16-1.13-1.06-.43c-.43-.18-.83-.41-1.23-.71l-.91-.7-1.06.43-1.27.51-.7-1.21 1.08-.84.89-.7-.14-1.13c-.03-.31-.05-.54-.05-.74s.02-.43.05-.73l.14-1.13-.89-.7-1.08-.84.7-1.21 1.27.51 1.04.42.9-.68c.43-.32.84-.56 1.25-.73l1.06-.43.16-1.13.2-1.35h1.39l.19 1.35.16 1.13 1.06.43c.43.18.83.41 1.23.71l.91.7 1.06-.43 1.27-.51.7 1.21-1.07.85-.89.7.14 1.13zM12 8c-2.21 0-4 1.79-4 4s1.79 4 4 4 4-1.79 4-4-1.79-4-4-4zm0 6c-1.1 0-2-.9-2-2s.9-2 2-2 2 .9 2 2-.9 2-2 2z"/></svg>
<svg class="i" style="left:1431.9px;top:48.1px" width="24.8" height="24.8" viewBox="0 0 24 24"><path fill="#23282d" transform="translate(24,0) scale(-1,1)" d="M21 11V3h-8l3.290 3.290-10 10L3 13v8h8l-3.290-3.290 10-10z"/></svg>
<div class="hline" style="left:732px;top:79px;width:728px"></div>
<svg class="i" style="left:732px;top:80px" width="728" height="504" viewBox="732 80 728 504">
<path d="M819.500 113v405.500M819 518.500h551.500" stroke="#444" stroke-width="1" fill="none"/>
<path d="M814 142.5h5M814 203.7h5M814 264.9h5M814 326.1h5M814 387.3h5M814 448.5h5M814 509.7h5M948.500 519v5M1099.500 519v5M1250.500 519v5" stroke="#444" stroke-width="1" fill="none"/>
<g font-family="DejaVu Sans, Liberation Sans, sans-serif" font-size="13" fill="#3a4452">
<text x="810.500" y="147.2" text-anchor="end">−27.85</text>
<text x="810.500" y="208.4" text-anchor="end">−27.9</text>
<text x="810.500" y="269.6" text-anchor="end">−27.95</text>
<text x="810.500" y="330.8" text-anchor="end">−28</text>
<text x="810.500" y="392.0" text-anchor="end">−28.05</text>
<text x="810.500" y="453.2" text-anchor="end">−28.1</text>
<text x="810.500" y="514.4" text-anchor="end">−28.15</text>
<text x="948.5" y="540" text-anchor="middle">53.1</text>
<text x="1099.5" y="540" text-anchor="middle">53</text>
<text x="1250.5" y="540" text-anchor="middle">52.9</text>
<text x="1095" y="567.700" text-anchor="middle" font-size="14">s_ra (deg)</text>
<text transform="translate(769.500,316) rotate(-90)" text-anchor="middle" font-size="14">s_dec (deg)</text>
</g>
<g fill="#1f77b4" fill-opacity="0.5"><circle cx="1068.2" cy="138.2" r="3.250"/><circle cx="1070.1" cy="155.8" r="3.250"/><circle cx="1093.1" cy="158.5" r="3.250"/><circle cx="1085.9" cy="167.7" r="3.250"/><circle cx="943.8" cy="169.8" r="3.250"/><circle cx="947.2" cy="170.5" r="3.250"/><circle cx="955.6" cy="176.4" r="3.250"/><circle cx="969.6" cy="173.7" r="3.250"/><circle cx="1003.1" cy="181.2" r="3.250"/><circle cx="996.2" cy="183.6" r="3.250"/><circle cx="1025.8" cy="183.3" r="3.250"/><circle cx="1017.9" cy="186.7" r="3.250"/><circle cx="1027.2" cy="190.4" r="3.250"/><circle cx="1027.8" cy="191.6" r="3.250"/><circle cx="1058.1" cy="186.7" r="3.250"/><circle cx="981.7" cy="192.7" r="3.250"/><circle cx="1048.3" cy="192.8" r="3.250"/><circle cx="1050.9" cy="194.5" r="3.250"/><circle cx="1069.4" cy="195.1" r="3.250"/><circle cx="1077.6" cy="190.4" r="3.250"/><circle cx="1083" cy="192.7" r="3.250"/><circle cx="1089.4" cy="193.4" r="3.250"/><circle cx="950.9" cy="203.3" r="3.250"/><circle cx="962.9" cy="203.6" r="3.250"/><circle cx="967.7" cy="205.3" r="3.250"/><circle cx="959.5" cy="207.9" r="3.250"/><circle cx="964.6" cy="207.9" r="3.250"/><circle cx="963.3" cy="209.9" r="3.250"/><circle cx="998.5" cy="200.7" r="3.250"/><circle cx="997.6" cy="205" r="3.250"/><circle cx="1017.1" cy="203.3" r="3.250"/><circle cx="1012.5" cy="204.5" r="3.250"/><circle cx="1009.9" cy="207.4" r="3.250"/><circle cx="1011.6" cy="208.7" r="3.250"/><circle cx="1014.2" cy="212.7" r="3.250"/><circle cx="1017.2" cy="214.4" r="3.250"/><circle cx="992.8" cy="210.1" r="3.250"/><circle cx="987.2" cy="212.8" r="3.250"/><circle cx="996.7" cy="214.5" r="3.250"/><circle cx="1004.6" cy="215.6" r="3.250"/><circle cx="1025.3" cy="214" r="3.250"/><circle cx="1023.2" cy="219.2" r="3.250"/><circle cx="1035.9" cy="213.3" r="3.250"/><circle cx="1040.3" cy="210.8" r="3.250"/><circle cx="1048.7" cy="203.8" r="3.250"/><circle cx="1048.7" cy="216.9" r="3.250"/><circle cx="1084.1" cy="205.7" r="3.250"/><circle cx="1083.4" cy="212" r="3.250"/><circle cx="925.3" cy="214.4" r="3.250"/><circle cx="953.7" cy="215.6" r="3.250"/><circle cx="971.8" cy="223.8" r="3.250"/><circle cx="988.2" cy="223.6" r="3.250"/><circle cx="997.9" cy="220.2" r="3.250"/><circle cx="1012.3" cy="227.7" r="3.250"/><circle cx="998.8" cy="230.9" r="3.250"/><circle cx="1034" cy="222.9" r="3.250"/><circle cx="1042.2" cy="223.6" r="3.250"/><circle cx="1039" cy="227.5" r="3.250"/><circle cx="1063.4" cy="223.3" r="3.250"/><circle cx="1060" cy="226.7" r="3.250"/><circle cx="1057.7" cy="227.9" r="3.250"/><circle cx="1077.7" cy="224.3" r="3.250"/><circle cx="1080.3" cy="224.8" r="3.250"/><circle cx="1088.2" cy="224.1" r="3.250"/><circle cx="1089" cy="223.8" r="3.250"/><circle cx="1086.3" cy="228.4" r="3.250"/><circle cx="1073.1" cy="230.1" r="3.250"/><circle cx="1074" cy="232.1" r="3.250"/><circle cx="961.9" cy="230.3" r="3.250"/><circle cx="966" cy="230.1" r="3.250"/><circle cx="954" cy="232.8" r="3.250"/><circle cx="954.7" cy="240.7" r="3.250"/><circle cx="1056.9" cy="235.6" r="3.250"/><circle cx="1065.1" cy="235.6" r="3.250"/><circle cx="890.1" cy="242.9" r="3.250"/><circle cx="891.1" cy="243.3" r="3.250"/><circle cx="895.1" cy="242.2" r="3.250"/><circle cx="929.9" cy="242.9" r="3.250"/><circle cx="954.4" cy="248.9" r="3.250"/><circle cx="988.2" cy="245.8" r="3.250"/><circle cx="996.7" cy="243.6" r="3.250"/><circle cx="1003.9" cy="246.5" r="3.250"/><circle cx="1011.6" cy="243.4" r="3.250"/><circle cx="1014.2" cy="243.8" r="3.250"/><circle cx="1016.7" cy="243.9" r="3.250"/><circle cx="1018.4" cy="244.1" r="3.250"/><circle cx="1023.9" cy="244.3" r="3.250"/><circle cx="1040" cy="244.1" r="3.250"/><circle cx="1048.7" cy="250.3" r="3.250"/><circle cx="1069" cy="246.3" r="3.250"/><circle cx="1079.1" cy="249.2" r="3.250"/><circle cx="1081.7" cy="248" r="3.250"/><circle cx="1093.1" cy="239" r="3.250"/><circle cx="1093.1" cy="246.3" r="3.250"/><circle cx="1093.1" cy="252.3" r="3.250"/><circle cx="1081.8" cy="256.1" r="3.250"/><circle cx="964.6" cy="253.2" r="3.250"/><circle cx="969.9" cy="258.1" r="3.250"/><circle cx="920.2" cy="259.5" r="3.250"/><circle cx="938.3" cy="261.5" r="3.250"/><circle cx="924.5" cy="265.1" r="3.250"/><circle cx="925.7" cy="266" r="3.250"/><circle cx="930.8" cy="266.5" r="3.250"/><circle cx="956.1" cy="266.1" r="3.250"/><circle cx="959.8" cy="266.1" r="3.250"/><circle cx="967" cy="266.7" r="3.250"/><circle cx="973.7" cy="267.9" r="3.250"/><circle cx="986.3" cy="265" r="3.250"/><circle cx="1001.5" cy="257.4" r="3.250"/><circle cx="1015.4" cy="259" r="3.250"/><circle cx="1022" cy="257.6" r="3.250"/><circle cx="1030.2" cy="262.7" r="3.250"/><circle cx="1012.5" cy="268.2" r="3.250"/><circle cx="1035.5" cy="269.9" r="3.250"/><circle cx="1033" cy="271.3" r="3.250"/><circle cx="1025.8" cy="275" r="3.250"/><circle cx="1059.6" cy="260.3" r="3.250"/><circle cx="1051.4" cy="262.6" r="3.250"/><circle cx="1052.3" cy="264.8" r="3.250"/><circle cx="1048.7" cy="266.1" r="3.250"/><circle cx="1056.4" cy="265.6" r="3.250"/><circle cx="1076.5" cy="267" r="3.250"/><circle cx="1088.7" cy="268.5" r="3.250"/><circle cx="997.6" cy="276.6" r="3.250"/><circle cx="1001.4" cy="277.6" r="3.250"/><circle cx="1002.6" cy="278.3" r="3.250"/><circle cx="1009.7" cy="276.6" r="3.250"/><circle cx="935.1" cy="278.3" r="3.250"/><circle cx="920.2" cy="280.5" r="3.250"/><circle cx="969.2" cy="279.6" r="3.250"/><circle cx="1038.6" cy="280.2" r="3.250"/><circle cx="1050.1" cy="278.8" r="3.250"/><circle cx="1064.1" cy="280.2" r="3.250"/><circle cx="1022" cy="257.6" r="3.250"/><circle cx="1105.6" cy="137.3" r="3.250"/><circle cx="1103.9" cy="161.1" r="3.250"/><circle cx="1109.9" cy="165" r="3.250"/><circle cx="1137.7" cy="179.7" r="3.250"/><circle cx="1173.3" cy="175.2" r="3.250"/><circle cx="1173.6" cy="181.6" r="3.250"/><circle cx="1161.8" cy="180.4" r="3.250"/><circle cx="1185.2" cy="185.7" r="3.250"/><circle cx="1208.1" cy="183.1" r="3.250"/><circle cx="1103" cy="182.1" r="3.250"/><circle cx="1115.5" cy="185.2" r="3.250"/><circle cx="1109.5" cy="188.6" r="3.250"/><circle cx="1109.5" cy="191.6" r="3.250"/><circle cx="1103.5" cy="195.1" r="3.250"/><circle cx="1101" cy="197.6" r="3.250"/><circle cx="1102.2" cy="196.8" r="3.250"/><circle cx="1117.7" cy="192.8" r="3.250"/><circle cx="1118.9" cy="197.3" r="3.250"/><circle cx="1124" cy="199.3" r="3.250"/><circle cx="1129.2" cy="202.2" r="3.250"/><circle cx="1120.3" cy="204.6" r="3.250"/><circle cx="1126.3" cy="204.6" r="3.250"/><circle cx="1134.8" cy="203.3" r="3.250"/><circle cx="1135.5" cy="203.9" r="3.250"/><circle cx="1134.3" cy="205.3" r="3.250"/><circle cx="1137.2" cy="208.4" r="3.250"/><circle cx="1140.3" cy="213" r="3.250"/><circle cx="1145.8" cy="192.3" r="3.250"/><circle cx="1153.1" cy="195.6" r="3.250"/><circle cx="1157.9" cy="200.9" r="3.250"/><circle cx="1161.3" cy="204.6" r="3.250"/><circle cx="1150" cy="209.6" r="3.250"/><circle cx="1179.4" cy="198.8" r="3.250"/><circle cx="1189.7" cy="201.9" r="3.250"/><circle cx="1183" cy="205.7" r="3.250"/><circle cx="1205.4" cy="196.8" r="3.250"/><circle cx="1173.3" cy="211" r="3.250"/><circle cx="1115.2" cy="213.5" r="3.250"/><circle cx="1115.8" cy="213.9" r="3.250"/><circle cx="1098.8" cy="217.3" r="3.250"/><circle cx="1135.2" cy="218.5" r="3.250"/><circle cx="1139.8" cy="218.1" r="3.250"/><circle cx="1139.1" cy="219.3" r="3.250"/><circle cx="1143.4" cy="222.1" r="3.250"/><circle cx="1146.8" cy="225.8" r="3.250"/><circle cx="1159.6" cy="221.2" r="3.250"/><circle cx="1163" cy="223.8" r="3.250"/><circle cx="1155.2" cy="227.7" r="3.250"/><circle cx="1162" cy="231.3" r="3.250"/><circle cx="1168.8" cy="235.7" r="3.250"/><circle cx="1197.9" cy="218.5" r="3.250"/><circle cx="1192.7" cy="222.4" r="3.250"/><circle cx="1188.5" cy="224.5" r="3.250"/><circle cx="1208.1" cy="216.8" r="3.250"/><circle cx="1212.9" cy="224.3" r="3.250"/><circle cx="1230.3" cy="206.7" r="3.250"/><circle cx="1228.8" cy="212.7" r="3.250"/><circle cx="1241.6" cy="209.2" r="3.250"/><circle cx="1238.2" cy="212.5" r="3.250"/><circle cx="1236" cy="215.1" r="3.250"/><circle cx="1244.2" cy="222.7" r="3.250"/><circle cx="1244.7" cy="223.1" r="3.250"/><circle cx="1252" cy="219.2" r="3.250"/><circle cx="1259.7" cy="215.2" r="3.250"/><circle cx="1231.2" cy="228.4" r="3.250"/><circle cx="1232.6" cy="228" r="3.250"/><circle cx="1286" cy="218.8" r="3.250"/><circle cx="1308.8" cy="215.9" r="3.250"/><circle cx="1310.3" cy="221.7" r="3.250"/><circle cx="1329.8" cy="229.4" r="3.250"/><circle cx="1102.2" cy="227" r="3.250"/><circle cx="1102.7" cy="229.6" r="3.250"/><circle cx="1110.7" cy="226.3" r="3.250"/><circle cx="1111.7" cy="225.3" r="3.250"/><circle cx="1125.8" cy="228.2" r="3.250"/><circle cx="1135.3" cy="230.6" r="3.250"/><circle cx="1098.8" cy="236.8" r="3.250"/><circle cx="1106.6" cy="238.6" r="3.250"/><circle cx="1115.8" cy="240.5" r="3.250"/><circle cx="1110" cy="242.9" r="3.250"/><circle cx="1097.6" cy="244.6" r="3.250"/><circle cx="1126.1" cy="238.6" r="3.250"/><circle cx="1127.8" cy="239" r="3.250"/><circle cx="1134.3" cy="238.1" r="3.250"/><circle cx="1140.6" cy="238.3" r="3.250"/><circle cx="1138.6" cy="242.1" r="3.250"/><circle cx="1141.1" cy="242.9" r="3.250"/><circle cx="1143.7" cy="242.4" r="3.250"/><circle cx="1144.6" cy="244.6" r="3.250"/><circle cx="1150.5" cy="239.8" r="3.250"/><circle cx="1151.4" cy="240.5" r="3.250"/><circle cx="1157.9" cy="239.8" r="3.250"/><circle cx="1159.1" cy="241.2" r="3.250"/><circle cx="1196.7" cy="241.7" r="3.250"/><circle cx="1236.8" cy="241.4" r="3.250"/><circle cx="1266.2" cy="235.6" r="3.250"/><circle cx="1272.7" cy="234.9" r="3.250"/><circle cx="1272.9" cy="242.2" r="3.250"/><circle cx="1274.8" cy="251.6" r="3.250"/><circle cx="1107.3" cy="251.1" r="3.250"/><circle cx="1122" cy="251.1" r="3.250"/><circle cx="1134.6" cy="248" r="3.250"/><circle cx="1133.4" cy="252.8" r="3.250"/><circle cx="1135.2" cy="254.4" r="3.250"/><circle cx="1136" cy="256.6" r="3.250"/><circle cx="1139.8" cy="252.8" r="3.250"/><circle cx="1154" cy="248" r="3.250"/><circle cx="1150" cy="253.8" r="3.250"/><circle cx="1153.1" cy="253.5" r="3.250"/><circle cx="1158.2" cy="252.3" r="3.250"/><circle cx="1159.1" cy="252.8" r="3.250"/><circle cx="1173.3" cy="250.9" r="3.250"/><circle cx="1174.6" cy="255.7" r="3.250"/><circle cx="1182.5" cy="247.4" r="3.250"/><circle cx="1202" cy="248" r="3.250"/><circle cx="1215.3" cy="250.4" r="3.250"/><circle cx="1220.6" cy="254.7" r="3.250"/><circle cx="1226.6" cy="254.7" r="3.250"/><circle cx="1133.4" cy="260.5" r="3.250"/><circle cx="1137.2" cy="259.7" r="3.250"/><circle cx="1141.1" cy="259.7" r="3.250"/><circle cx="1147.1" cy="262.2" r="3.250"/><circle cx="1146.3" cy="265.5" r="3.250"/><circle cx="1145.8" cy="266.8" r="3.250"/><circle cx="1145.8" cy="271.4" r="3.250"/><circle cx="1121.1" cy="265.5" r="3.250"/><circle cx="1125.4" cy="265.5" r="3.250"/><circle cx="1162" cy="262.2" r="3.250"/><circle cx="1168.7" cy="259.7" r="3.250"/><circle cx="1163.5" cy="269.1" r="3.250"/><circle cx="1179.6" cy="261.7" r="3.250"/><circle cx="1185.9" cy="261.2" r="3.250"/><circle cx="1177" cy="267.2" r="3.250"/><circle cx="1180.4" cy="268.2" r="3.250"/><circle cx="1183" cy="266" r="3.250"/><circle cx="1184.2" cy="266.8" r="3.250"/><circle cx="1171.9" cy="269.1" r="3.250"/><circle cx="1183.9" cy="271.1" r="3.250"/><circle cx="1175.3" cy="274.7" r="3.250"/><circle cx="1196" cy="265.6" r="3.250"/><circle cx="1221.6" cy="271.1" r="3.250"/><circle cx="1240.8" cy="268.9" r="3.250"/><circle cx="1239.4" cy="273.3" r="3.250"/><circle cx="1213.8" cy="275.4" r="3.250"/><circle cx="1228.1" cy="276.9" r="3.250"/><circle cx="1268.8" cy="266.3" r="3.250"/><circle cx="1279.2" cy="261.9" r="3.250"/><circle cx="1283.8" cy="261.2" r="3.250"/><circle cx="1285.5" cy="263.1" r="3.250"/><circle cx="1290.7" cy="267.3" r="3.250"/><circle cx="1292.4" cy="270.2" r="3.250"/><circle cx="1293.2" cy="272.8" r="3.250"/><circle cx="1297.5" cy="266.1" r="3.250"/><circle cx="1281.3" cy="274.9" r="3.250"/><circle cx="1320.1" cy="266.1" r="3.250"/><circle cx="1328.8" cy="261" r="3.250"/><circle cx="1114.1" cy="274.2" r="3.250"/><circle cx="1122.3" cy="278.8" r="3.250"/><circle cx="1124" cy="279.6" r="3.250"/><circle cx="1134.3" cy="280.5" r="3.250"/><circle cx="1172.2" cy="279.6" r="3.250"/><circle cx="1192.1" cy="278.8" r="3.250"/><circle cx="1211.2" cy="280.5" r="3.250"/><circle cx="1248.8" cy="278.8" r="3.250"/><circle cx="1265.5" cy="278.8" r="3.250"/><circle cx="1292.4" cy="271.1" r="3.250"/><circle cx="933" cy="283.1" r="3.250"/><circle cx="945" cy="283.6" r="3.250"/><circle cx="945.5" cy="286.6" r="3.250"/><circle cx="962.9" cy="283.6" r="3.250"/><circle cx="964.6" cy="284.4" r="3.250"/><circle cx="968.9" cy="284.8" r="3.250"/><circle cx="972.8" cy="288.7" r="3.250"/><circle cx="973.2" cy="290.4" r="3.250"/><circle cx="996.7" cy="284.4" r="3.250"/><circle cx="1000.5" cy="282.4" r="3.250"/><circle cx="1019.6" cy="283.4" r="3.250"/><circle cx="1021.3" cy="289.9" r="3.250"/><circle cx="1068.9" cy="287.3" r="3.250"/><circle cx="1091.1" cy="287.8" r="3.250"/><circle cx="1086.3" cy="291.6" r="3.250"/><circle cx="871.8" cy="296.4" r="3.250"/><circle cx="914.5" cy="295.5" r="3.250"/><circle cx="937.6" cy="295" r="3.250"/><circle cx="1046.3" cy="294.8" r="3.250"/><circle cx="1074.8" cy="294.3" r="3.250"/><circle cx="1026.5" cy="297.9" r="3.250"/><circle cx="974.2" cy="297.9" r="3.250"/><circle cx="970.6" cy="302" r="3.250"/><circle cx="961.5" cy="302.7" r="3.250"/><circle cx="965.1" cy="304.9" r="3.250"/><circle cx="986.3" cy="301.5" r="3.250"/><circle cx="1012.3" cy="305.6" r="3.250"/><circle cx="1059.5" cy="302.7" r="3.250"/><circle cx="1076.9" cy="303.6" r="3.250"/><circle cx="851.7" cy="314.3" r="3.250"/><circle cx="887.2" cy="309.5" r="3.250"/><circle cx="887.2" cy="317.2" r="3.250"/><circle cx="899.3" cy="315.9" r="3.250"/><circle cx="909.1" cy="312.3" r="3.250"/><circle cx="923.9" cy="311.4" r="3.250"/><circle cx="936.4" cy="308.7" r="3.250"/><circle cx="978.3" cy="311.1" r="3.250"/><circle cx="1030.4" cy="308.7" r="3.250"/><circle cx="1037.9" cy="313.1" r="3.250"/><circle cx="1045.3" cy="314.2" r="3.250"/><circle cx="1057.7" cy="313.3" r="3.250"/><circle cx="1063.4" cy="313.5" r="3.250"/><circle cx="1067.5" cy="311.9" r="3.250"/><circle cx="1074.3" cy="318.6" r="3.250"/><circle cx="1092.4" cy="317.7" r="3.250"/><circle cx="928.7" cy="318.8" r="3.250"/><circle cx="932.5" cy="318.6" r="3.250"/><circle cx="940.9" cy="318.6" r="3.250"/><circle cx="962.9" cy="316.9" r="3.250"/><circle cx="963.4" cy="319.8" r="3.250"/><circle cx="973.3" cy="320.8" r="3.250"/><circle cx="956.1" cy="324.9" r="3.250"/><circle cx="1037.6" cy="322.5" r="3.250"/><circle cx="1049" cy="322.9" r="3.250"/><circle cx="1084.1" cy="322.5" r="3.250"/><circle cx="1086.1" cy="327.5" r="3.250"/><circle cx="971.1" cy="331.8" r="3.250"/><circle cx="983.9" cy="330.2" r="3.250"/><circle cx="1000.8" cy="330" r="3.250"/><circle cx="997.4" cy="333.1" r="3.250"/><circle cx="1021" cy="332.9" r="3.250"/><circle cx="1055.5" cy="330.6" r="3.250"/><circle cx="1054.3" cy="332.8" r="3.250"/><circle cx="1042.7" cy="334.7" r="3.250"/><circle cx="940" cy="335.3" r="3.250"/><circle cx="984.8" cy="338.8" r="3.250"/><circle cx="983.1" cy="340.8" r="3.250"/><circle cx="1002.9" cy="339.8" r="3.250"/><circle cx="1021.5" cy="341.3" r="3.250"/><circle cx="1037.1" cy="341.5" r="3.250"/><circle cx="1044.9" cy="343" r="3.250"/><circle cx="1062.9" cy="341.2" r="3.250"/><circle cx="1074" cy="343.9" r="3.250"/><circle cx="911.5" cy="341.7" r="3.250"/><circle cx="915.1" cy="348.3" r="3.250"/><circle cx="948" cy="346.3" r="3.250"/><circle cx="993.7" cy="345.4" r="3.250"/><circle cx="992.3" cy="349.2" r="3.250"/><circle cx="983.4" cy="351.9" r="3.250"/><circle cx="1057.7" cy="351.2" r="3.250"/><circle cx="1091.1" cy="350.5" r="3.250"/><circle cx="929.9" cy="355.3" r="3.250"/><circle cx="941.5" cy="354.5" r="3.250"/><circle cx="943.6" cy="355.7" r="3.250"/><circle cx="944.1" cy="357.4" r="3.250"/><circle cx="962.2" cy="358.8" r="3.250"/><circle cx="1004.3" cy="357" r="3.250"/><circle cx="1011.1" cy="354.8" r="3.250"/><circle cx="1013" cy="357.4" r="3.250"/><circle cx="1044.2" cy="354.8" r="3.250"/><circle cx="1062" cy="360.5" r="3.250"/><circle cx="928.7" cy="363.5" r="3.250"/><circle cx="933.5" cy="364.9" r="3.250"/><circle cx="979" cy="365.1" r="3.250"/><circle cx="987.7" cy="362.9" r="3.250"/><circle cx="990.6" cy="371.2" r="3.250"/><circle cx="875.2" cy="370.2" r="3.250"/><circle cx="891.8" cy="368.7" r="3.250"/><circle cx="853.9" cy="379.1" r="3.250"/><circle cx="934.2" cy="375.5" r="3.250"/><circle cx="964.3" cy="375.7" r="3.250"/><circle cx="1009.4" cy="369.9" r="3.250"/><circle cx="1010.4" cy="374.1" r="3.250"/><circle cx="1015.9" cy="369.3" r="3.250"/><circle cx="1019" cy="374.6" r="3.250"/><circle cx="1021" cy="377.7" r="3.250"/><circle cx="1025.5" cy="372.6" r="3.250"/><circle cx="1043.7" cy="371.7" r="3.250"/><circle cx="1054.8" cy="368.7" r="3.250"/><circle cx="1068.5" cy="370.7" r="3.250"/><circle cx="1080.1" cy="374.1" r="3.250"/><circle cx="1080.3" cy="375.3" r="3.250"/><circle cx="1085.9" cy="378.4" r="3.250"/><circle cx="928.2" cy="385.6" r="3.250"/><circle cx="939.2" cy="383.2" r="3.250"/><circle cx="947.2" cy="386.1" r="3.250"/><circle cx="961.7" cy="386.4" r="3.250"/><circle cx="981.7" cy="389.3" r="3.250"/><circle cx="1011.3" cy="393.8" r="3.250"/><circle cx="1011.8" cy="394.1" r="3.250"/><circle cx="1076.5" cy="398.1" r="3.250"/><circle cx="1086.8" cy="397.2" r="3.250"/><circle cx="1090.6" cy="395.8" r="3.250"/><circle cx="1095" cy="387.8" r="3.250"/><circle cx="1095" cy="398.9" r="3.250"/><circle cx="865.7" cy="409.5" r="3.250"/><circle cx="866.4" cy="409.2" r="3.250"/><circle cx="892" cy="403.4" r="3.250"/><circle cx="906.5" cy="405.1" r="3.250"/><circle cx="914.5" cy="399.8" r="3.250"/><circle cx="918.1" cy="398.2" r="3.250"/><circle cx="916.4" cy="402.7" r="3.250"/><circle cx="923.3" cy="405.6" r="3.250"/><circle cx="928.9" cy="398.1" r="3.250"/><circle cx="929.9" cy="401.8" r="3.250"/><circle cx="937.3" cy="404.2" r="3.250"/><circle cx="1012.5" cy="405.7" r="3.250"/><circle cx="1042" cy="407.1" r="3.250"/><circle cx="1048.3" cy="408.1" r="3.250"/><circle cx="1027.8" cy="412.4" r="3.250"/><circle cx="1028.9" cy="412.7" r="3.250"/><circle cx="1081.7" cy="410.4" r="3.250"/><circle cx="1084.7" cy="410.4" r="3.250"/><circle cx="1091.9" cy="410" r="3.250"/><circle cx="943.3" cy="416" r="3.250"/><circle cx="992.3" cy="417.7" r="3.250"/><circle cx="995.4" cy="417.7" r="3.250"/><circle cx="996.7" cy="415.1" r="3.250"/><circle cx="997.6" cy="418" r="3.250"/><circle cx="999.6" cy="420.3" r="3.250"/><circle cx="1003.9" cy="415.5" r="3.250"/><circle cx="1005.6" cy="415.5" r="3.250"/><circle cx="1012.8" cy="415.3" r="3.250"/><circle cx="1005.8" cy="421.5" r="3.250"/><circle cx="989.7" cy="422.8" r="3.250"/><circle cx="1087.7" cy="416.5" r="3.250"/><circle cx="1090.2" cy="417.7" r="3.250"/><circle cx="919" cy="426.1" r="3.250"/><circle cx="968" cy="425.4" r="3.250"/><circle cx="969.1" cy="426.1" r="3.250"/><circle cx="1014.2" cy="428.8" r="3.250"/><circle cx="1038.4" cy="423.3" r="3.250"/><circle cx="1045.4" cy="422.3" r="3.250"/><circle cx="913.4" cy="436.5" r="3.250"/><circle cx="1031.3" cy="435.6" r="3.250"/><circle cx="1089.4" cy="436.2" r="3.250"/><circle cx="1095" cy="431.4" r="3.250"/><circle cx="1002.9" cy="339.8" r="3.250"/><circle cx="1004.3" cy="357" r="3.250"/><circle cx="1010.4" cy="374.1" r="3.250"/><circle cx="1057.7" cy="351.2" r="3.250"/><circle cx="929.9" cy="401.8" r="3.250"/><circle cx="928.9" cy="398.1" r="3.250"/><circle cx="1076.5" cy="398.1" r="3.250"/><circle cx="1099.8" cy="286.5" r="3.250"/><circle cx="1100.5" cy="287" r="3.250"/><circle cx="1109" cy="284.8" r="3.250"/><circle cx="1110.9" cy="284.8" r="3.250"/><circle cx="1110.4" cy="289.9" r="3.250"/><circle cx="1099.3" cy="295.9" r="3.250"/><circle cx="1121.5" cy="283.6" r="3.250"/><circle cx="1130.5" cy="289.2" r="3.250"/><circle cx="1142.5" cy="293" r="3.250"/><circle cx="1142.8" cy="294.7" r="3.250"/><circle cx="1150.4" cy="297.7" r="3.250"/><circle cx="1156" cy="292.1" r="3.250"/><circle cx="1158.2" cy="291.3" r="3.250"/><circle cx="1169.7" cy="284.4" r="3.250"/><circle cx="1169.3" cy="288.7" r="3.250"/><circle cx="1180.4" cy="284.1" r="3.250"/><circle cx="1181.3" cy="284.8" r="3.250"/><circle cx="1199.6" cy="282.7" r="3.250"/><circle cx="1199.2" cy="288.3" r="3.250"/><circle cx="1202.7" cy="287.8" r="3.250"/><circle cx="1220.6" cy="289.5" r="3.250"/><circle cx="1221.8" cy="295.7" r="3.250"/><circle cx="1229.3" cy="289" r="3.250"/><circle cx="1236.8" cy="289.5" r="3.250"/><circle cx="1237.2" cy="294.2" r="3.250"/><circle cx="1243.7" cy="282.4" r="3.250"/><circle cx="1264.5" cy="288.7" r="3.250"/><circle cx="1125.1" cy="303" r="3.250"/><circle cx="1154" cy="307.7" r="3.250"/><circle cx="1177" cy="302.4" r="3.250"/><circle cx="1191.5" cy="300.7" r="3.250"/><circle cx="1194.1" cy="298.6" r="3.250"/><circle cx="1198" cy="303.2" r="3.250"/><circle cx="1216.8" cy="308" r="3.250"/><circle cx="1222.3" cy="305.8" r="3.250"/><circle cx="1242.5" cy="302.4" r="3.250"/><circle cx="1241.4" cy="306.3" r="3.250"/><circle cx="1250.8" cy="310.6" r="3.250"/><circle cx="1271" cy="303.7" r="3.250"/><circle cx="1280.9" cy="309.4" r="3.250"/><circle cx="1288.4" cy="303.9" r="3.250"/><circle cx="1108.3" cy="316.9" r="3.250"/><circle cx="1100.6" cy="321.2" r="3.250"/><circle cx="1101.5" cy="324.1" r="3.250"/><circle cx="1185.9" cy="315.5" r="3.250"/><circle cx="1202.7" cy="312.4" r="3.250"/><circle cx="1204.4" cy="315.7" r="3.250"/><circle cx="1207.8" cy="315.7" r="3.250"/><circle cx="1225.2" cy="314.5" r="3.250"/><circle cx="1235.1" cy="313.5" r="3.250"/><circle cx="1243.7" cy="317.2" r="3.250"/><circle cx="1194.5" cy="322" r="3.250"/><circle cx="1194.1" cy="328" r="3.250"/><circle cx="1195.3" cy="330.9" r="3.250"/><circle cx="1216" cy="324.1" r="3.250"/><circle cx="1227.8" cy="323.2" r="3.250"/><circle cx="1214.6" cy="329.4" r="3.250"/><circle cx="1205.6" cy="330" r="3.250"/><circle cx="1208.6" cy="334.5" r="3.250"/><circle cx="1244.5" cy="324.2" r="3.250"/><circle cx="1257.7" cy="324.4" r="3.250"/><circle cx="1271.9" cy="323.2" r="3.250"/><circle cx="1279.2" cy="327.5" r="3.250"/><circle cx="1286" cy="321.7" r="3.250"/><circle cx="1297.7" cy="326.6" r="3.250"/><circle cx="1321.1" cy="325.1" r="3.250"/><circle cx="1125.4" cy="329.7" r="3.250"/><circle cx="1129.7" cy="328.8" r="3.250"/><circle cx="1123.2" cy="333.1" r="3.250"/><circle cx="1144.6" cy="334.5" r="3.250"/><circle cx="1157.9" cy="327.1" r="3.250"/><circle cx="1158.6" cy="328" r="3.250"/><circle cx="1163.9" cy="334.7" r="3.250"/><circle cx="1179.1" cy="329.2" r="3.250"/><circle cx="1180.8" cy="330.2" r="3.250"/><circle cx="1239.9" cy="332.6" r="3.250"/><circle cx="1256.1" cy="335.7" r="3.250"/><circle cx="1264.2" cy="331.1" r="3.250"/><circle cx="1270.2" cy="331.8" r="3.250"/><circle cx="1269.6" cy="336.4" r="3.250"/><circle cx="1276.6" cy="332.6" r="3.250"/><circle cx="1284.2" cy="334.3" r="3.250"/><circle cx="1298.3" cy="336.9" r="3.250"/><circle cx="1111.6" cy="340" r="3.250"/><circle cx="1105.8" cy="343.5" r="3.250"/><circle cx="1139.1" cy="344.7" r="3.250"/><circle cx="1126.1" cy="346.4" r="3.250"/><circle cx="1125.8" cy="349.9" r="3.250"/><circle cx="1129.2" cy="350.7" r="3.250"/><circle cx="1132.6" cy="351.6" r="3.250"/><circle cx="1136.5" cy="351.6" r="3.250"/><circle cx="1181.3" cy="341.2" r="3.250"/><circle cx="1184.7" cy="343" r="3.250"/><circle cx="1224.5" cy="341" r="3.250"/><circle cx="1228.3" cy="340" r="3.250"/><circle cx="1249.5" cy="342" r="3.250"/><circle cx="1281.8" cy="341.8" r="3.250"/><circle cx="1283.1" cy="351.1" r="3.250"/><circle cx="1212.1" cy="348" r="3.250"/><circle cx="1212.6" cy="351.1" r="3.250"/><circle cx="1212.9" cy="352.8" r="3.250"/><circle cx="1206.9" cy="355" r="3.250"/><circle cx="1212.9" cy="355.8" r="3.250"/><circle cx="1189.8" cy="354.5" r="3.250"/><circle cx="1196.2" cy="354.8" r="3.250"/><circle cx="1175" cy="353.5" r="3.250"/><circle cx="1118.4" cy="355" r="3.250"/><circle cx="1118.1" cy="359.8" r="3.250"/><circle cx="1123" cy="364.7" r="3.250"/><circle cx="1136.7" cy="362.3" r="3.250"/><circle cx="1158.7" cy="359.9" r="3.250"/><circle cx="1160.1" cy="365.1" r="3.250"/><circle cx="1099.8" cy="363.7" r="3.250"/><circle cx="1101.8" cy="371.4" r="3.250"/><circle cx="1305.2" cy="361" r="3.250"/><circle cx="1319.5" cy="357.9" r="3.250"/><circle cx="1295.3" cy="364.2" r="3.250"/><circle cx="1293.2" cy="365.9" r="3.250"/><circle cx="1285.5" cy="373.1" r="3.250"/><circle cx="1315.4" cy="371.4" r="3.250"/><circle cx="1324.8" cy="371.1" r="3.250"/><circle cx="1325.3" cy="376.7" r="3.250"/><circle cx="1339.4" cy="371.7" r="3.250"/><circle cx="1150.5" cy="369.9" r="3.250"/><circle cx="1156" cy="373.3" r="3.250"/><circle cx="1160.3" cy="373.8" r="3.250"/><circle cx="1163.9" cy="372.6" r="3.250"/><circle cx="1154.8" cy="375.5" r="3.250"/><circle cx="1162.5" cy="377.5" r="3.250"/><circle cx="1148.8" cy="377" r="3.250"/><circle cx="1151.4" cy="379.8" r="3.250"/><circle cx="1152.6" cy="381" r="3.250"/><circle cx="1181" cy="373.4" r="3.250"/><circle cx="1183.9" cy="379.8" r="3.250"/><circle cx="1172.9" cy="378.1" r="3.250"/><circle cx="1243.7" cy="371.9" r="3.250"/><circle cx="1247.9" cy="373.8" r="3.250"/><circle cx="1259.4" cy="371.6" r="3.250"/><circle cx="1264.5" cy="369.9" r="3.250"/><circle cx="1238.2" cy="379.6" r="3.250"/><circle cx="1241.1" cy="379.6" r="3.250"/><circle cx="1244" cy="378.7" r="3.250"/><circle cx="1228.6" cy="380.8" r="3.250"/><circle cx="1221.8" cy="383" r="3.250"/><circle cx="1277.8" cy="379.3" r="3.250"/><circle cx="1134.8" cy="381.5" r="3.250"/><circle cx="1127.1" cy="385.2" r="3.250"/><circle cx="1142.3" cy="386.1" r="3.250"/><circle cx="1103.2" cy="384.6" r="3.250"/><circle cx="1098.8" cy="393.8" r="3.250"/><circle cx="1096.7" cy="395.8" r="3.250"/><circle cx="1184.7" cy="386.6" r="3.250"/><circle cx="1185.2" cy="388.3" r="3.250"/><circle cx="1203" cy="384.6" r="3.250"/><circle cx="1205.2" cy="386.6" r="3.250"/><circle cx="1208.6" cy="390.4" r="3.250"/><circle cx="1210.3" cy="393.3" r="3.250"/><circle cx="1211.2" cy="395" r="3.250"/><circle cx="1212.9" cy="397.2" r="3.250"/><circle cx="1221.5" cy="392.6" r="3.250"/><circle cx="1238.2" cy="393.3" r="3.250"/><circle cx="1236.1" cy="398.9" r="3.250"/><circle cx="1246.6" cy="396" r="3.250"/><circle cx="1255.1" cy="394.1" r="3.250"/><circle cx="1252.2" cy="400.1" r="3.250"/><circle cx="1257" cy="400.1" r="3.250"/><circle cx="1266.4" cy="388.8" r="3.250"/><circle cx="1273.1" cy="395.7" r="3.250"/><circle cx="1171.6" cy="397.7" r="3.250"/><circle cx="1177.9" cy="400.1" r="3.250"/><circle cx="1182.1" cy="401.8" r="3.250"/><circle cx="1195.3" cy="402.3" r="3.250"/><circle cx="1199.6" cy="403.4" r="3.250"/><circle cx="1200.9" cy="404.4" r="3.250"/><circle cx="1203.9" cy="407.5" r="3.250"/><circle cx="1207.8" cy="401.5" r="3.250"/><circle cx="1122.3" cy="404.7" r="3.250"/><circle cx="1126.3" cy="411.9" r="3.250"/><circle cx="1101" cy="410" r="3.250"/><circle cx="1107.8" cy="412.6" r="3.250"/><circle cx="1140.3" cy="410" r="3.250"/><circle cx="1140.8" cy="411.4" r="3.250"/><circle cx="1143.7" cy="407.8" r="3.250"/><circle cx="1170.2" cy="406.9" r="3.250"/><circle cx="1171" cy="407.8" r="3.250"/><circle cx="1167.8" cy="412.6" r="3.250"/><circle cx="1185.6" cy="410.9" r="3.250"/><circle cx="1192.6" cy="412.7" r="3.250"/><circle cx="1208.6" cy="412.9" r="3.250"/><circle cx="1211.2" cy="412.6" r="3.250"/><circle cx="1213.8" cy="412.2" r="3.250"/><circle cx="1215.1" cy="412.1" r="3.250"/><circle cx="1229.1" cy="411.9" r="3.250"/><circle cx="1253.6" cy="406.6" r="3.250"/><circle cx="1254.3" cy="408.8" r="3.250"/><circle cx="1254.8" cy="410.5" r="3.250"/><circle cx="1250.5" cy="412.1" r="3.250"/><circle cx="1263" cy="413.8" r="3.250"/><circle cx="1271.9" cy="408.1" r="3.250"/><circle cx="1299.7" cy="408.8" r="3.250"/><circle cx="1305.5" cy="412.2" r="3.250"/><circle cx="1102.7" cy="419.1" r="3.250"/><circle cx="1106.1" cy="418.6" r="3.250"/><circle cx="1107" cy="424.5" r="3.250"/><circle cx="1159.1" cy="416" r="3.250"/><circle cx="1159.4" cy="419.8" r="3.250"/><circle cx="1157.4" cy="422.5" r="3.250"/><circle cx="1161.3" cy="424.2" r="3.250"/><circle cx="1156.5" cy="425.9" r="3.250"/><circle cx="1157.9" cy="431.4" r="3.250"/><circle cx="1173.6" cy="418.2" r="3.250"/><circle cx="1175" cy="419.1" r="3.250"/><circle cx="1177.4" cy="418.2" r="3.250"/><circle cx="1207.8" cy="417.7" r="3.250"/><circle cx="1117.2" cy="428.8" r="3.250"/><circle cx="1129.2" cy="426.2" r="3.250"/><circle cx="1145.8" cy="426.6" r="3.250"/><circle cx="1150.5" cy="430" r="3.250"/><circle cx="1135.5" cy="431" r="3.250"/><circle cx="1131.4" cy="434.8" r="3.250"/><circle cx="1211.7" cy="429" r="3.250"/><circle cx="1216" cy="431.4" r="3.250"/><circle cx="1220.6" cy="432.7" r="3.250"/><circle cx="1248.8" cy="422.8" r="3.250"/><circle cx="1247.6" cy="426.6" r="3.250"/><circle cx="1274.8" cy="426.2" r="3.250"/><circle cx="1245.4" cy="436.5" r="3.250"/><circle cx="1249.5" cy="342" r="3.250"/><circle cx="1283.1" cy="351.1" r="3.250"/><circle cx="1225.2" cy="314.5" r="3.250"/><circle cx="1221.5" cy="392.6" r="3.250"/><circle cx="1274.8" cy="426.2" r="3.250"/><circle cx="1101.8" cy="371.4" r="3.250"/><circle cx="1220.6" cy="432.7" r="3.250"/><circle cx="1194.5" cy="328" r="3.250"/><circle cx="1020.5" cy="447.3" r="3.250"/><circle cx="1020.7" cy="455.1" r="3.250"/><circle cx="1074" cy="443" r="3.250"/><circle cx="1076.5" cy="440.8" r="3.250"/><circle cx="1045.3" cy="457" r="3.250"/><circle cx="1050.1" cy="456.7" r="3.250"/><circle cx="1057.7" cy="454.1" r="3.250"/><circle cx="1061.2" cy="454.6" r="3.250"/><circle cx="1062" cy="454.6" r="3.250"/><circle cx="1058.6" cy="459.2" r="3.250"/><circle cx="1075.7" cy="458.7" r="3.250"/><circle cx="1090.6" cy="455.5" r="3.250"/><circle cx="1074.8" cy="469.5" r="3.250"/><circle cx="1041.2" cy="469.8" r="3.250"/><circle cx="1031.1" cy="476.3" r="3.250"/><circle cx="1016.4" cy="481.3" r="3.250"/><circle cx="993.3" cy="474.6" r="3.250"/><circle cx="994.2" cy="473.9" r="3.250"/><circle cx="952.1" cy="477.8" r="3.250"/><circle cx="1075.2" cy="489.8" r="3.250"/><circle cx="1080" cy="493.2" r="3.250"/><circle cx="1148.3" cy="440.1" r="3.250"/><circle cx="1151.6" cy="446.4" r="3.250"/><circle cx="1101.2" cy="454.3" r="3.250"/><circle cx="1103.2" cy="465.7" r="3.250"/><circle cx="1111.7" cy="465.5" r="3.250"/><circle cx="1144.6" cy="460.4" r="3.250"/><circle cx="1154.5" cy="464.2" r="3.250"/><circle cx="1167.3" cy="463.5" r="3.250"/><circle cx="1179.4" cy="468.8" r="3.250"/><circle cx="1189" cy="447.6" r="3.250"/><circle cx="1212.1" cy="445.5" r="3.250"/><circle cx="1212.6" cy="445.9" r="3.250"/><circle cx="1232.2" cy="440.6" r="3.250"/><circle cx="1247.9" cy="440.8" r="3.250"/><circle cx="1227.9" cy="463" r="3.250"/><circle cx="1231.4" cy="463.3" r="3.250"/><circle cx="1228.8" cy="468.1" r="3.250"/><circle cx="1226.7" cy="472.7" r="3.250"/><circle cx="1202.7" cy="491.5" r="3.250"/><circle cx="1203" cy="491.5" r="3.250"/></g>
<circle cx="1096.400" cy="191.800" r="3.700" fill="#ff9a0d"/>
</svg>
</div></div>
<div class="panel" id="tp" style="left:2px;top:589px;width:1459px;height:326px;background:#f0f4f8">
<div style="position:absolute;left:-3px;top:-590px;width:1463px;height:915px">
<span class="t" style="left:5.8px;top:592.8px;font-size:13px;color:#32383e;letter-spacing:-0.28px;">ivoa.ObsCore - data-int</span>
<svg class="i" style="left:139px;top:595.500px" width="10" height="10" viewBox="0 0 10 10"><path d="M1 1l8 8M9 1l-8 8" stroke="#32383e" stroke-width="1.300"/></svg>
<svg class="i" style="left:536.7px;top:596.2px" width="25" height="25" viewBox="0 0 24 24"><path fill="#23282d" d="M18.410 16.590 13.820 12l4.590-4.590L17 6l-6 6 6 6zM6 6h2v12H6z"/></svg>
<svg class="i" style="left:566.4px;top:596.2px" width="25" height="25" viewBox="0 0 24 24"><path fill="#23282d" d="M15.410 7.410 14 6l-6 6 6 6 1.410-1.410L10.830 12z"/></svg>
<div class="b" style="left:594.5px;top:595.5px;width:40px;height:26px;border:1px solid #cdd7e1;border-radius:6px;background:#fbfcfe"></div>
<span class="t" style="left:603px;top:602.2px;font-size:13px;color:#32383e;">1</span>
<span class="t" style="left:639px;top:602.2px;font-size:13px;color:#32383e;letter-spacing:-0.48px;">of 8</span>
<svg class="i" style="left:661.6px;top:596.2px" width="25" height="25" viewBox="0 0 24 24"><path fill="#23282d" d="M10 6 8.590 7.410 13.170 12l-4.580 4.590L10 18l6-6z"/></svg>
<svg class="i" style="left:691.4px;top:596.2px" width="25" height="25" viewBox="0 0 24 24"><path fill="#23282d" d="M5.590 7.410 10.180 12l-4.590 4.590L7 18l6-6-6-6zM16 6h2v12h-2z"/></svg>
<span class="t" style="left:719px;top:602.2px;font-size:13px;color:#32383e;letter-spacing:-0.55px;">(1 - 100 of 783)</span>
<svg class="i" style="left:1185.2px;top:593.2px" width="31" height="31" viewBox="0 0 24 24"><path fill="#23282d" d="M7 19c-1.100 0-2 .9-2 2h14c0-1.100-.9-2-2-2h-4v-2h3c1.100 0 2-.9 2-2h-8c-1.660 0-3-1.340-3-3 0-1.090.59-2.040 1.460-2.560C8.170 9.030 8 8.540 8 8c0-.21.04-.42.09-.62C6.280 8.130 5 9.920 5 12c0 2.760 2.240 5 5 5v2H7zM10.560 5.510C11.910 5.540 13 6.640 13 8c0 .75-.33 1.410-.85 1.870l.59 1.620.94-.34.34.94 1.880-.68-.34-.94.94-.34L13.760 2.600l-.94.34-.34-.94-1.880.68.34.94-.94.35.56 1.540z"/><circle cx="10.500" cy="8" r="1.500" fill="#23282d"/></svg>
<svg class="i" style="left:1182px;top:617.700px" width="12" height="7" viewBox="0 0 12 7"><path fill="#23282d" d="M1.200 0h9.600q1.300 0 .5 1l-4.400 5.200q-.9 1-1.800 0l-4.400-5.200q-.8-1 .5-1z"/></svg>
<svg class="i" style="left:1223.9px;top:595.7px" width="27.8" height="27.8" viewBox="0 0 24 24"><path fill="#23282d" d="M7 6h10l-5.01 6.3L7 6zm-2.750-.39C6.27 8.2 10 13 10 13v6c0 .55.45 1 1 1h2c.55 0 1-.45 1-1v-6s3.72-4.8 5.74-7.39c.51-.66.04-1.61-.79-1.61H5.04c-.83 0-1.300.95-.79 1.61z"/></svg>
<svg class="i" style="left:1258.6px;top:595.4px" width="27.3" height="27.3" viewBox="0 0 24 24"><path fill="#23282d" d="M2.5 4v3h5v12h3V7h5V4h-13zm19 5h-9v3h3v7h3v-7h3V9z"/></svg>
<svg class="i" style="left:1292.1px;top:594px" width="30.5" height="30.5" viewBox="0 0 24 24"><path fill="#23282d" d="M17 3H5c-1.110 0-2 .9-2 2v14c0 1.100.89 2 2 2h14c1.100 0 2-.9 2-2V7l-4-4zm2 16H5V5h11.170L19 7.830V19zm-7-7c-1.660 0-3 1.340-3 3s1.340 3 3 3 3-1.340 3-3-1.340-3-3-3zM6 6h9v4H6z"/></svg>
<svg class="i" style="left:1332px;top:596px" width="28" height="26" viewBox="0 0 28 26"><rect x="2.200" y="2.600" width="6" height="20" rx="1.200" fill="none" stroke="#23282d" stroke-width="1.900"/><circle cx="18.400" cy="13.500" r="6.500" fill="none" stroke="#23282d" stroke-width="1.400"/><path d="M14.800 13.500h7.200M18.400 9.900v7.200" stroke="#23282d" stroke-width="1.400"/></svg>
<svg class="i" style="left:1362.5px;top:594.1px" width="30.2" height="30.2" viewBox="0 0 24 24"><path fill="#23282d" d="M11 7h2v2h-2zm0 4h2v6h-2zm1-9C6.480 2 2 6.480 2 12s4.480 10 10 10 10-4.480 10-10S17.520 2 12 2zm0 18c-4.410 0-8-3.590-8-8s3.590-8 8-8 8 3.590 8 8-3.590 8-8 8z"/></svg>
<svg class="i" style="left:1398.6px;top:594.8px" width="28.6" height="28.6" viewBox="0 0 24 24"><path fill="#23282d" d="M19.43 12.98c.04-.32.07-.64.07-.98 0-.34-.03-.66-.07-.98l2.11-1.65c.19-.15.24-.42.12-.64l-2-3.46c-.09-.16-.26-.25-.44-.25-.06 0-.12.01-.17.03l-2.49 1c-.52-.4-1.08-.73-1.69-.98l-.38-2.65C14.46 2.18 14.25 2 14 2h-4c-.25 0-.46.18-.49.42l-.38 2.65c-.61.25-1.17.59-1.69.98l-2.49-1c-.06-.02-.12-.03-.18-.03-.17 0-.34.09-.43.25l-2 3.46c-.13.22-.07.49.12.64l2.11 1.65c-.04.32-.07.65-.07.98 0 .33.03.66.07.98l-2.11 1.65c-.19.15-.24.42-.12.64l2 3.46c.09.16.26.25.44.25.06 0 .12-.01.17-.03l2.49-1c.52.4 1.08.73 1.69.98l.38 2.65c.03.24.24.42.49.42h4c.25 0 .46-.18.49-.42l.38-2.65c.61-.25 1.17-.59 1.69-.98l2.49 1c.06.02.12.03.18.03.17 0 .34-.09.43-.25l2-3.46c.12-.22.07-.49-.12-.64l-2.11-1.65zm-1.98-1.71c.04.31.05.52.05.73 0 .21-.02.43-.05.73l-.14 1.13.89.7 1.08.84-.7 1.21-1.27-.51-1.04-.42-.9.68c-.43.32-.84.56-1.25.73l-1.06.43-.16 1.13-.2 1.35h-1.4l-.19-1.35-.16-1.13-1.06-.43c-.43-.18-.83-.41-1.23-.71l-.91-.7-1.06.43-1.27.51-.7-1.21 1.08-.84.89-.7-.14-1.13c-.03-.31-.05-.54-.05-.74s.02-.43.05-.73l.14-1.13-.89-.7-1.08-.84.7-1.21 1.27.51 1.04.42.9-.68c.43-.32.84-.56 1.25-.73l1.06-.43.16-1.13.2-1.35h1.39l.19 1.35.16 1.13 1.06.43c.43.18.83.41 1.23.71l.91.7 1.06-.43 1.27-.51.7 1.21-1.07.85-.89.7.14 1.13zM12 8c-2.21 0-4 1.79-4 4s1.79 4 4 4 4-1.79 4-4-1.79-4-4-4zm0 6c-1.1 0-2-.9-2-2s.9-2 2-2 2 .9 2 2-.9 2-2 2z"/></svg>
<svg class="i" style="left:1432.1px;top:596.1px" width="25.2" height="25.2" viewBox="0 0 24 24"><path fill="#23282d" transform="translate(24,0) scale(-1,1)" d="M21 11V3h-8l3.290 3.290-10 10L3 13v8h8l-3.290-3.290 10-10z"/></svg>
<div class="b" style="left:3px;top:628px;width:1457px;height:286px;background:#fbfcfe;border-top:1px solid #cdd7e1"></div>
<div style="position:absolute;left:0;top:629px;width:1460px;height:80px;overflow:hidden"><div style="position:absolute;left:0;top:-629px">
<div class="b" style="left:9.3px;top:631.2px;width:14.6px;height:15.6px;border:1px solid #cdd7e1;border-radius:4px;background:#fbfcfe"></div>
<svg class="i" style="left:6.2px;top:683.1px" width="20.2" height="20.2" viewBox="0 0 24 24"><path fill="#23282d" d="M7 6h10l-5.01 6.3L7 6zm-2.750-.39C6.27 8.2 10 13 10 13v6c0 .55.45 1 1 1h2c.55 0 1-.45 1-1v-6s3.72-4.8 5.74-7.39c.51-.66.04-1.61-.79-1.61H5.04c-.83 0-1.300.95-.79 1.61z"/></svg>
<div class="b" style="left:30px;top:629px;width:2px;height:286px;background:#cdd7e1;opacity:.9"></div>
<div class="b" style="left:157px;top:629px;width:1px;height:81px;background:#d3dce6"></div>
<div class="b" style="left:308px;top:629px;width:1px;height:81px;background:#d3dce6"></div>
<div class="b" style="left:388px;top:629px;width:1px;height:81px;background:#d3dce6"></div>
<div class="b" style="left:471px;top:629px;width:1px;height:81px;background:#d3dce6"></div>
<div class="b" style="left:537px;top:629px;width:1px;height:81px;background:#d3dce6"></div>
<div class="b" style="left:603px;top:629px;width:1px;height:81px;background:#d3dce6"></div>
<div class="b" style="left:686px;top:629px;width:1px;height:81px;background:#d3dce6"></div>
<div class="b" style="left:769px;top:629px;width:1px;height:81px;background:#d3dce6"></div>
<div class="b" style="left:839px;top:629px;width:1px;height:81px;background:#d3dce6"></div>
<div class="b" style="left:933px;top:629px;width:1px;height:81px;background:#d3dce6"></div>
<div class="b" style="left:1028px;top:629px;width:1px;height:81px;background:#d3dce6"></div>
<div class="b" style="left:1104px;top:629px;width:1px;height:81px;background:#d3dce6"></div>
<div class="b" style="left:1233px;top:629px;width:1px;height:81px;background:#d3dce6"></div>
<div class="b" style="left:1362px;top:629px;width:1px;height:81px;background:#d3dce6"></div>
<span class="t" style="left:43.7px;top:631.8px;font-size:13px;color:#23282d;letter-spacing:0.03px;">dataproduct_type</span>
<span class="t" style="left:31px;width:126px;text-align:center;top:664.4px;font-size:13.300px;color:#4a5560">char</span>
<div class="b" style="left:33.5px;top:680.4px;width:121px;height:26.2px;border:1px solid #cdd7e1;border-radius:6px;background:#fbfcfe"></div>
<svg class="i" style="left:140.8px;top:692px" width="6" height="4" viewBox="0 0 6 4"><path fill="#444c55" d="M0 0h6l-3 4z"/></svg>
<span class="t" style="left:172.5px;top:631.8px;font-size:13px;color:#23282d;">dataproduct_subtype</span>
<span class="t" style="left:158px;width:150px;text-align:center;top:664.4px;font-size:13.300px;color:#4a5560">char</span>
<div class="b" style="left:160.5px;top:680.4px;width:145px;height:26.2px;border:1px solid #cdd7e1;border-radius:6px;background:#fbfcfe"></div>
<svg class="i" style="left:291.8px;top:692px" width="6" height="4" viewBox="0 0 6 4"><path fill="#444c55" d="M0 0h6l-3 4z"/></svg>
<span class="t" style="left:318.6px;top:631.8px;font-size:13px;color:#23282d;letter-spacing:-0.03px;">calib_level</span>
<span class="t" style="left:309px;width:79px;text-align:center;top:664.4px;font-size:13.300px;color:#4a5560">integer</span>
<div class="b" style="left:311.5px;top:680.4px;width:74px;height:26.2px;border:1px solid #cdd7e1;border-radius:6px;background:#fbfcfe"></div>
<svg class="i" style="left:371.8px;top:692px" width="6" height="4" viewBox="0 0 6 4"><path fill="#444c55" d="M0 0h6l-3 4z"/></svg>
<span class="t" style="left:403px;top:631.8px;font-size:13px;color:#23282d;letter-spacing:-0.14px;">lsst_band</span>
<span class="t" style="left:389px;width:82px;text-align:center;top:664.4px;font-size:13.300px;color:#4a5560">char</span>
<div class="b" style="left:391.5px;top:680.4px;width:77px;height:26.2px;border:1px solid #cdd7e1;border-radius:6px;background:#fbfcfe"></div>
<svg class="i" style="left:454.8px;top:692px" width="6" height="4" viewBox="0 0 6 4"><path fill="#444c55" d="M0 0h6l-3 4z"/></svg>
<span class="t" style="left:481px;top:631.8px;font-size:13px;color:#23282d;letter-spacing:0.01px;">em_min</span>
<span class="t" style="left:472px;width:65px;text-align:center;top:648.8px;font-size:13px;color:#4a5560">(m)</span>
<span class="t" style="left:472px;width:65px;text-align:center;top:664.4px;font-size:13.300px;color:#4a5560">double</span>
<div class="b" style="left:474.5px;top:680.4px;width:60px;height:26.2px;border:1px solid #cdd7e1;border-radius:6px;background:#fbfcfe"></div>
<span class="t" style="left:546.3px;top:631.8px;font-size:13px;color:#23282d;letter-spacing:-0.21px;">em_max</span>
<span class="t" style="left:538px;width:65px;text-align:center;top:648.8px;font-size:13px;color:#4a5560">(m)</span>
<span class="t" style="left:538px;width:65px;text-align:center;top:664.4px;font-size:13.300px;color:#4a5560">double</span>
<div class="b" style="left:540.5px;top:680.4px;width:60px;height:26.2px;border:1px solid #cdd7e1;border-radius:6px;background:#fbfcfe"></div>
<span class="t" style="left:618.3px;top:631.8px;font-size:13px;color:#23282d;letter-spacing:0.04px;">lsst_tract</span>
<span class="t" style="left:604px;width:82px;text-align:center;top:664.4px;font-size:13.300px;color:#4a5560">long</span>
<div class="b" style="left:606.5px;top:680.4px;width:77px;height:26.2px;border:1px solid #cdd7e1;border-radius:6px;background:#fbfcfe"></div>
<span class="t" style="left:698.3px;top:631.8px;font-size:13px;color:#23282d;letter-spacing:-0.16px;">lsst_patch</span>
<span class="t" style="left:687px;width:82px;text-align:center;top:664.4px;font-size:13.300px;color:#4a5560">long</span>
<div class="b" style="left:689.5px;top:680.4px;width:77px;height:26.2px;border:1px solid #cdd7e1;border-radius:6px;background:#fbfcfe"></div>
<span class="t" style="left:778.7px;top:631.8px;font-size:13px;color:#23282d;">lsst_filter</span>
<span class="t" style="left:770px;width:69px;text-align:center;top:664.4px;font-size:13.300px;color:#4a5560">char</span>
<div class="b" style="left:772.5px;top:680.4px;width:64px;height:26.2px;border:1px solid #cdd7e1;border-radius:6px;background:#fbfcfe"></div>
<svg class="i" style="left:822.8px;top:692px" width="6" height="4" viewBox="0 0 6 4"><path fill="#444c55" d="M0 0h6l-3 4z"/></svg>
<span class="t" style="left:862px;top:631.8px;font-size:13px;color:#23282d;letter-spacing:0.06px;">lsst_visit</span>
<span class="t" style="left:840px;width:93px;text-align:center;top:664.4px;font-size:13.300px;color:#4a5560">long</span>
<div class="b" style="left:842.5px;top:680.4px;width:88px;height:26.2px;border:1px solid #cdd7e1;border-radius:6px;background:#fbfcfe"></div>
<span class="t" style="left:944.5px;top:631.8px;font-size:13px;color:#23282d;letter-spacing:-0.05px;">lsst_detector</span>
<span class="t" style="left:934px;width:94px;text-align:center;top:664.4px;font-size:13.300px;color:#4a5560">long</span>
<div class="b" style="left:936.5px;top:680.4px;width:89px;height:26.2px;border:1px solid #cdd7e1;border-radius:6px;background:#fbfcfe"></div>
<svg class="i" style="left:1011.8px;top:692px" width="6" height="4" viewBox="0 0 6 4"><path fill="#444c55" d="M0 0h6l-3 4z"/></svg>
<span class="t" style="left:1038.4px;top:631.8px;font-size:13px;color:#23282d;letter-spacing:0.01px;">t_exptime</span>
<span class="t" style="left:1029px;width:75px;text-align:center;top:648.8px;font-size:13px;color:#4a5560">(s)</span>
<span class="t" style="left:1029px;width:75px;text-align:center;top:664.4px;font-size:13.300px;color:#4a5560">double</span>
<div class="b" style="left:1031.5px;top:680.4px;width:70px;height:26.2px;border:1px solid #cdd7e1;border-radius:6px;background:#fbfcfe"></div>
<span class="t" style="left:1153.4px;top:631.8px;font-size:13px;color:#23282d;letter-spacing:0.02px;">t_min</span>
<span class="t" style="left:1105px;width:128px;text-align:center;top:648.8px;font-size:13px;color:#4a5560">(d)</span>
<span class="t" style="left:1105px;width:128px;text-align:center;top:664.4px;font-size:13.300px;color:#4a5560">double</span>
<div class="b" style="left:1107.5px;top:680.4px;width:123px;height:26.2px;border:1px solid #cdd7e1;border-radius:6px;background:#fbfcfe"></div>
<span class="t" style="left:1281px;top:631.8px;font-size:13px;color:#23282d;letter-spacing:-0.02px;">t_max</span>
<span class="t" style="left:1234px;width:128px;text-align:center;top:648.8px;font-size:13px;color:#4a5560">(d)</span>
<span class="t" style="left:1234px;width:128px;text-align:center;top:664.4px;font-size:13.300px;color:#4a5560">double</span>
<div class="b" style="left:1236.5px;top:680.4px;width:123px;height:26.2px;border:1px solid #cdd7e1;border-radius:6px;background:#fbfcfe"></div>
<span class="t" style="left:1416px;top:631.8px;font-size:13px;color:#23282d;letter-spacing:-0.66px;">s_ra</span>
<span class="t" style="left:1363px;width:128px;text-align:center;top:648.8px;font-size:13px;color:#4a5560">(deg)</span>
<span class="t" style="left:1363px;width:128px;text-align:center;top:664.4px;font-size:13.300px;color:#4a5560">double</span>
<div class="b" style="left:1365.5px;top:680.4px;width:123px;height:26.2px;border:1px solid #cdd7e1;border-radius:6px;background:#fbfcfe"></div>
<span class="t" style="left:387.9px;top:643.59px;font-size:41px;color:#000;font-weight:700;transform:scaleX(.91);transform-origin:0 0;">B</span>
<span class="t" style="left:1113px;top:643.45px;font-size:42px;color:#000;font-weight:700;transform:scaleX(.91);transform-origin:0 0;">C</span>
</div></div>
<div style="position:absolute;left:0;top:709px;width:1443px;height:186px;overflow:hidden"><div style="position:absolute;left:0;top:-709px">
<div class="b" style="left:3px;top:709.5px;width:1440px;height:21px;background:#fcdcb9"></div>
<div class="b" style="left:157px;top:629px;width:1px;height:290px;background:#d3dce6"></div>
<div class="b" style="left:308px;top:629px;width:1px;height:290px;background:#d3dce6"></div>
<div class="b" style="left:388px;top:629px;width:1px;height:290px;background:#d3dce6"></div>
<div class="b" style="left:471px;top:629px;width:1px;height:290px;background:#d3dce6"></div>
<div class="b" style="left:537px;top:629px;width:1px;height:290px;background:#d3dce6"></div>
<div class="b" style="left:603px;top:629px;width:1px;height:290px;background:#d3dce6"></div>
<div class="b" style="left:686px;top:629px;width:1px;height:290px;background:#d3dce6"></div>
<div class="b" style="left:769px;top:629px;width:1px;height:290px;background:#d3dce6"></div>
<div class="b" style="left:839px;top:629px;width:1px;height:290px;background:#d3dce6"></div>
<div class="b" style="left:933px;top:629px;width:1px;height:290px;background:#d3dce6"></div>
<div class="b" style="left:1028px;top:629px;width:1px;height:290px;background:#d3dce6"></div>
<div class="b" style="left:1104px;top:629px;width:1px;height:290px;background:#d3dce6"></div>
<div class="b" style="left:1233px;top:629px;width:1px;height:290px;background:#d3dce6"></div>
<div class="b" style="left:1362px;top:629px;width:1px;height:290px;background:#d3dce6"></div>
<div class="b" style="left:30px;top:629px;width:2px;height:290px;background:#cdd7e1"></div>
<div class="b" style="left:3px;top:730px;width:1440px;height:1px;background:#dbe2ea"></div>
<div class="b" style="left:9.3px;top:712.5px;width:14.6px;height:14.3px;border:1px solid #cdd7e1;border-radius:4px;background:#fbfcfe"></div>
<span class="t" style="left:33.5px;top:713.64px;font-size:12px;color:#23282d;letter-spacing:0.11px;">image</span>
<span class="t" style="left:160.7px;top:713.64px;font-size:12px;color:#23282d;letter-spacing:0.14px;">lsst.visit_image</span>
<span class="t" style="left:311.2px;top:713.64px;font-size:12px;color:#23282d;">2</span>
<span class="t" style="left:391px;top:713.64px;font-size:12px;color:#23282d;">g</span>
<span class="t" style="left:474px;top:713.64px;font-size:12px;color:#23282d;letter-spacing:-0.12px;">4.026e-7</span>
<span class="t" style="left:540px;top:713.64px;font-size:12px;color:#23282d;letter-spacing:-0.12px;">5.483e-7</span>
<span class="t" style="left:771.5px;top:713.64px;font-size:12px;color:#23282d;letter-spacing:-0.34px;">g_01</span>
<span class="t" style="left:841.7px;top:713.64px;font-size:12px;color:#23282d;letter-spacing:-0.07px;">2024110800295</span>
<span class="t" style="left:936.7px;top:713.64px;font-size:12px;color:#23282d;">1</span>
<span class="t" style="left:1031.4px;top:713.64px;font-size:12px;color:#23282d;letter-spacing:-0.31px;">30</span>
<span class="t" style="left:1108.2px;top:713.64px;font-size:12px;color:#23282d;letter-spacing:-0.14px;">60623.30145844911</span>
<span class="t" style="left:1236.6px;top:713.64px;font-size:12px;color:#23282d;letter-spacing:-0.15px;">60623.30181074074</span>
<span class="t" style="left:1365.4px;top:713.64px;font-size:12px;color:#23282d;letter-spacing:-0.21px;">53.00207180103</span>
<div class="b" style="left:3px;top:752px;width:1440px;height:1px;background:#dbe2ea"></div>
<div class="b" style="left:9.3px;top:734.5px;width:14.6px;height:14.3px;border:1px solid #cdd7e1;border-radius:4px;background:#fbfcfe"></div>
<span class="t" style="left:33.5px;top:735.64px;font-size:12px;color:#23282d;letter-spacing:0.11px">image</span>
<span class="t" style="left:160.7px;top:735.64px;font-size:12px;color:#23282d;letter-spacing:0.14px">lsst.visit_image</span>
<span class="t" style="left:311.2px;top:735.64px;font-size:12px;color:#23282d;letter-spacing:0.00px">2</span>
<span class="t" style="left:391px;top:735.64px;font-size:12px;color:#23282d;letter-spacing:0.00px">i</span>
<span class="t" style="left:474px;top:735.64px;font-size:12px;color:#23282d;letter-spacing:-0.12px">6.936e-7</span>
<span class="t" style="left:540px;top:735.64px;font-size:12px;color:#23282d;letter-spacing:-0.12px">8.188e-7</span>
<span class="t" style="left:771.5px;top:735.64px;font-size:12px;color:#23282d;letter-spacing:-0.34px">i_06</span>
<span class="t" style="left:841.7px;top:735.64px;font-size:12px;color:#23282d;letter-spacing:-0.07px">2024110800296</span>
<span class="t" style="left:936.7px;top:735.64px;font-size:12px;color:#23282d;letter-spacing:0.00px">1</span>
<span class="t" style="left:1031.4px;top:735.64px;font-size:12px;color:#23282d;letter-spacing:-0.31px">30</span>
<span class="t" style="left:1108.2px;top:735.64px;font-size:12px;color:#23282d;letter-spacing:-0.14px">60623.30244138884</span>
<span class="t" style="left:1236.6px;top:735.64px;font-size:12px;color:#23282d;letter-spacing:-0.15px">60623.302793703704</span>
<span class="t" style="left:1365.4px;top:735.64px;font-size:12px;color:#23282d;letter-spacing:-0.21px">53.00275904626</span>
<div class="b" style="left:3px;top:774px;width:1440px;height:1px;background:#dbe2ea"></div>
<div class="b" style="left:9.3px;top:756.5px;width:14.6px;height:14.3px;border:1px solid #cdd7e1;border-radius:4px;background:#fbfcfe"></div>
<span class="t" style="left:33.5px;top:757.64px;font-size:12px;color:#23282d;letter-spacing:0.11px">image</span>
<span class="t" style="left:160.7px;top:757.64px;font-size:12px;color:#23282d;letter-spacing:0.14px">lsst.visit_image</span>
<span class="t" style="left:311.2px;top:757.64px;font-size:12px;color:#23282d;letter-spacing:0.00px">2</span>
<span class="t" style="left:391px;top:757.64px;font-size:12px;color:#23282d;letter-spacing:0.00px">i</span>
<span class="t" style="left:474px;top:757.64px;font-size:12px;color:#23282d;letter-spacing:-0.12px">6.936e-7</span>
<span class="t" style="left:540px;top:757.64px;font-size:12px;color:#23282d;letter-spacing:-0.12px">8.188e-7</span>
<span class="t" style="left:771.5px;top:757.64px;font-size:12px;color:#23282d;letter-spacing:-0.34px">i_06</span>
<span class="t" style="left:841.7px;top:757.64px;font-size:12px;color:#23282d;letter-spacing:-0.07px">2024110800303</span>
<span class="t" style="left:936.7px;top:757.64px;font-size:12px;color:#23282d;letter-spacing:0.00px">1</span>
<span class="t" style="left:1031.4px;top:757.64px;font-size:12px;color:#23282d;letter-spacing:-0.31px">30</span>
<span class="t" style="left:1108.2px;top:757.64px;font-size:12px;color:#23282d;letter-spacing:-0.14px">60623.307721041616</span>
<span class="t" style="left:1236.6px;top:757.64px;font-size:12px;color:#23282d;letter-spacing:-0.15px">60623.30807329861</span>
<span class="t" style="left:1365.4px;top:757.64px;font-size:12px;color:#23282d;letter-spacing:-0.21px">52.99737272859</span>
<div class="b" style="left:3px;top:796px;width:1440px;height:1px;background:#dbe2ea"></div>
<div class="b" style="left:9.3px;top:778.5px;width:14.6px;height:14.3px;border:1px solid #cdd7e1;border-radius:4px;background:#fbfcfe"></div>
<span class="t" style="left:33.5px;top:779.64px;font-size:12px;color:#23282d;letter-spacing:0.11px">image</span>
<span class="t" style="left:160.7px;top:779.64px;font-size:12px;color:#23282d;letter-spacing:0.14px">lsst.visit_image</span>
<span class="t" style="left:311.2px;top:779.64px;font-size:12px;color:#23282d;letter-spacing:0.00px">2</span>
<span class="t" style="left:391px;top:779.64px;font-size:12px;color:#23282d;letter-spacing:0.00px">g</span>
<span class="t" style="left:474px;top:779.64px;font-size:12px;color:#23282d;letter-spacing:-0.12px">4.026e-7</span>
<span class="t" style="left:540px;top:779.64px;font-size:12px;color:#23282d;letter-spacing:-0.12px">5.483e-7</span>
<span class="t" style="left:771.5px;top:779.64px;font-size:12px;color:#23282d;letter-spacing:-0.34px">g_01</span>
<span class="t" style="left:841.7px;top:779.64px;font-size:12px;color:#23282d;letter-spacing:-0.07px">2024110800304</span>
<span class="t" style="left:936.7px;top:779.64px;font-size:12px;color:#23282d;letter-spacing:0.00px">1</span>
<span class="t" style="left:1031.4px;top:779.64px;font-size:12px;color:#23282d;letter-spacing:-0.31px">30</span>
<span class="t" style="left:1108.2px;top:779.64px;font-size:12px;color:#23282d;letter-spacing:-0.14px">60623.308731041856</span>
<span class="t" style="left:1236.6px;top:779.64px;font-size:12px;color:#23282d;letter-spacing:-0.15px">60623.30908333333</span>
<span class="t" style="left:1365.4px;top:779.64px;font-size:12px;color:#23282d;letter-spacing:-0.21px">52.99853506026</span>
<div class="b" style="left:3px;top:818px;width:1440px;height:1px;background:#dbe2ea"></div>
<div class="b" style="left:9.3px;top:800.5px;width:14.6px;height:14.3px;border:1px solid #cdd7e1;border-radius:4px;background:#fbfcfe"></div>
<span class="t" style="left:33.5px;top:801.64px;font-size:12px;color:#23282d;letter-spacing:0.11px">image</span>
<span class="t" style="left:160.7px;top:801.64px;font-size:12px;color:#23282d;letter-spacing:0.14px">lsst.visit_image</span>
<span class="t" style="left:311.2px;top:801.64px;font-size:12px;color:#23282d;letter-spacing:0.00px">2</span>
<span class="t" style="left:391px;top:801.64px;font-size:12px;color:#23282d;letter-spacing:0.00px">z</span>
<span class="t" style="left:474px;top:801.64px;font-size:12px;color:#23282d;letter-spacing:-0.12px">8.192e-7</span>
<span class="t" style="left:540px;top:801.64px;font-size:12px;color:#23282d;letter-spacing:-0.12px">9.201e-7</span>
<span class="t" style="left:771.5px;top:801.64px;font-size:12px;color:#23282d;letter-spacing:-0.34px">z_03</span>
<span class="t" style="left:841.7px;top:801.64px;font-size:12px;color:#23282d;letter-spacing:-0.07px">2024111200307</span>
<span class="t" style="left:936.7px;top:801.64px;font-size:12px;color:#23282d;letter-spacing:0.00px">5</span>
<span class="t" style="left:1031.4px;top:801.64px;font-size:12px;color:#23282d;letter-spacing:-0.31px">30</span>
<span class="t" style="left:1108.2px;top:801.64px;font-size:12px;color:#23282d;letter-spacing:-0.14px">60627.280727395795</span>
<span class="t" style="left:1236.6px;top:801.64px;font-size:12px;color:#23282d;letter-spacing:-0.15px">60627.28107975695</span>
<span class="t" style="left:1365.4px;top:801.64px;font-size:12px;color:#23282d;letter-spacing:-0.21px">53.01997985826</span>
<div class="b" style="left:3px;top:840px;width:1440px;height:1px;background:#dbe2ea"></div>
<div class="b" style="left:9.3px;top:822.5px;width:14.6px;height:14.3px;border:1px solid #cdd7e1;border-radius:4px;background:#fbfcfe"></div>
<span class="t" style="left:33.5px;top:823.64px;font-size:12px;color:#23282d;letter-spacing:0.11px">image</span>
<span class="t" style="left:160.7px;top:823.64px;font-size:12px;color:#23282d;letter-spacing:0.14px">lsst.visit_image</span>
<span class="t" style="left:311.2px;top:823.64px;font-size:12px;color:#23282d;letter-spacing:0.00px">2</span>
<span class="t" style="left:391px;top:823.64px;font-size:12px;color:#23282d;letter-spacing:0.00px">y</span>
<span class="t" style="left:474px;top:823.64px;font-size:12px;color:#23282d;letter-spacing:-0.12px">9.278e-7</span>
<span class="t" style="left:540px;top:823.64px;font-size:12px;color:#23282d;letter-spacing:-0.12px">1.1e-6</span>
<span class="t" style="left:771.5px;top:823.64px;font-size:12px;color:#23282d;letter-spacing:-0.34px">y_04</span>
<span class="t" style="left:841.7px;top:823.64px;font-size:12px;color:#23282d;letter-spacing:-0.07px">2024112000234</span>
<span class="t" style="left:936.7px;top:823.64px;font-size:12px;color:#23282d;letter-spacing:0.00px">2</span>
<span class="t" style="left:1031.4px;top:823.64px;font-size:12px;color:#23282d;letter-spacing:-0.31px">30</span>
<span class="t" style="left:1108.2px;top:823.64px;font-size:12px;color:#23282d;letter-spacing:-0.14px">60635.259658761795</span>
<span class="t" style="left:1236.6px;top:823.64px;font-size:12px;color:#23282d;letter-spacing:-0.15px">60635.260011087965</span>
<span class="t" style="left:1365.4px;top:823.64px;font-size:12px;color:#23282d;letter-spacing:-0.21px">53.03228111636</span>
<div class="b" style="left:3px;top:862px;width:1440px;height:1px;background:#dbe2ea"></div>
<div class="b" style="left:9.3px;top:844.5px;width:14.6px;height:14.3px;border:1px solid #cdd7e1;border-radius:4px;background:#fbfcfe"></div>
<span class="t" style="left:33.5px;top:845.64px;font-size:12px;color:#23282d;letter-spacing:0.11px">image</span>
<span class="t" style="left:160.7px;top:845.64px;font-size:12px;color:#23282d;letter-spacing:0.14px">lsst.visit_image</span>
<span class="t" style="left:311.2px;top:845.64px;font-size:12px;color:#23282d;letter-spacing:0.00px">2</span>
<span class="t" style="left:391px;top:845.64px;font-size:12px;color:#23282d;letter-spacing:0.00px">i</span>
<span class="t" style="left:474px;top:845.64px;font-size:12px;color:#23282d;letter-spacing:-0.12px">6.936e-7</span>
<span class="t" style="left:540px;top:845.64px;font-size:12px;color:#23282d;letter-spacing:-0.12px">8.188e-7</span>
<span class="t" style="left:771.5px;top:845.64px;font-size:12px;color:#23282d;letter-spacing:-0.34px">i_06</span>
<span class="t" style="left:841.7px;top:845.64px;font-size:12px;color:#23282d;letter-spacing:-0.07px">2024112000235</span>
<span class="t" style="left:936.7px;top:845.64px;font-size:12px;color:#23282d;letter-spacing:0.00px">2</span>
<span class="t" style="left:1031.4px;top:845.64px;font-size:12px;color:#23282d;letter-spacing:-0.31px">30</span>
<span class="t" style="left:1108.2px;top:845.64px;font-size:12px;color:#23282d;letter-spacing:-0.14px">60635.26085197926</span>
<span class="t" style="left:1236.6px;top:845.64px;font-size:12px;color:#23282d;letter-spacing:-0.15px">60635.26120415509</span>
<span class="t" style="left:1365.4px;top:845.64px;font-size:12px;color:#23282d;letter-spacing:-0.21px">53.00057525306</span>
<div class="b" style="left:3px;top:884px;width:1440px;height:1px;background:#dbe2ea"></div>
<div class="b" style="left:9.3px;top:866.5px;width:14.6px;height:14.3px;border:1px solid #cdd7e1;border-radius:4px;background:#fbfcfe"></div>
<span class="t" style="left:33.5px;top:867.64px;font-size:12px;color:#23282d;letter-spacing:0.11px">image</span>
<span class="t" style="left:160.7px;top:867.64px;font-size:12px;color:#23282d;letter-spacing:0.14px">lsst.visit_image</span>
<span class="t" style="left:311.2px;top:867.64px;font-size:12px;color:#23282d;letter-spacing:0.00px">2</span>
<span class="t" style="left:391px;top:867.64px;font-size:12px;color:#23282d;letter-spacing:0.00px">u</span>
<span class="t" style="left:474px;top:867.64px;font-size:12px;color:#23282d;letter-spacing:-0.12px">3e-7</span>
<span class="t" style="left:540px;top:867.64px;font-size:12px;color:#23282d;letter-spacing:-0.12px">3.932e-7</span>
<span class="t" style="left:771.5px;top:867.64px;font-size:12px;color:#23282d;letter-spacing:-0.34px">u_02</span>
<span class="t" style="left:841.7px;top:867.64px;font-size:12px;color:#23282d;letter-spacing:-0.07px">2024110900197</span>
<span class="t" style="left:936.7px;top:867.64px;font-size:12px;color:#23282d;letter-spacing:0.00px">2</span>
<span class="t" style="left:1031.4px;top:867.64px;font-size:12px;color:#23282d;letter-spacing:-0.31px">30</span>
<span class="t" style="left:1108.2px;top:867.64px;font-size:12px;color:#23282d;letter-spacing:-0.14px">60624.30683143531</span>
<span class="t" style="left:1236.6px;top:867.64px;font-size:12px;color:#23282d;letter-spacing:-0.15px">60624.307183703706</span>
<span class="t" style="left:1365.4px;top:867.64px;font-size:12px;color:#23282d;letter-spacing:-0.21px">52.95079838806</span>
<div class="b" style="left:3px;top:906px;width:1440px;height:1px;background:#dbe2ea"></div>
<div class="b" style="left:9.3px;top:888.5px;width:14.6px;height:14.3px;border:1px solid #cdd7e1;border-radius:4px;background:#fbfcfe"></div>
<span class="t" style="left:33.5px;top:889.64px;font-size:12px;color:#23282d;letter-spacing:0.11px">image</span>
<span class="t" style="left:160.7px;top:889.64px;font-size:12px;color:#23282d;letter-spacing:0.14px">lsst.visit_image</span>
<span class="t" style="left:311.2px;top:889.64px;font-size:12px;color:#23282d;letter-spacing:0.00px">2</span>
<span class="t" style="left:391px;top:889.64px;font-size:12px;color:#23282d;letter-spacing:0.00px">z</span>
<span class="t" style="left:474px;top:889.64px;font-size:12px;color:#23282d;letter-spacing:-0.12px">8.192e-7</span>
<span class="t" style="left:540px;top:889.64px;font-size:12px;color:#23282d;letter-spacing:-0.12px">9.201e-7</span>
<span class="t" style="left:771.5px;top:889.64px;font-size:12px;color:#23282d;letter-spacing:-0.34px">z_03</span>
<span class="t" style="left:841.7px;top:889.64px;font-size:12px;color:#23282d;letter-spacing:-0.07px">2024111200310</span>
<span class="t" style="left:936.7px;top:889.64px;font-size:12px;color:#23282d;letter-spacing:0.00px">1</span>
<span class="t" style="left:1031.4px;top:889.64px;font-size:12px;color:#23282d;letter-spacing:-0.31px">30</span>
<span class="t" style="left:1108.2px;top:889.64px;font-size:12px;color:#23282d;letter-spacing:-0.14px">60627.28249739146</span>
<span class="t" style="left:1236.6px;top:889.64px;font-size:12px;color:#23282d;letter-spacing:-0.15px">60627.28284949074</span>
<span class="t" style="left:1365.4px;top:889.64px;font-size:12px;color:#23282d;letter-spacing:-0.21px">52.95107515096</span>
</div></div>
<div class="b" style="left:1449px;top:714px;width:6px;height:24px;background:#c0ccda;border-radius:3px"></div>
<div class="b" style="left:10px;top:901.5px;width:649px;height:6px;background:#c3c8ce;border-radius:3px"></div>
</div></div>
</div>
</body></html>
